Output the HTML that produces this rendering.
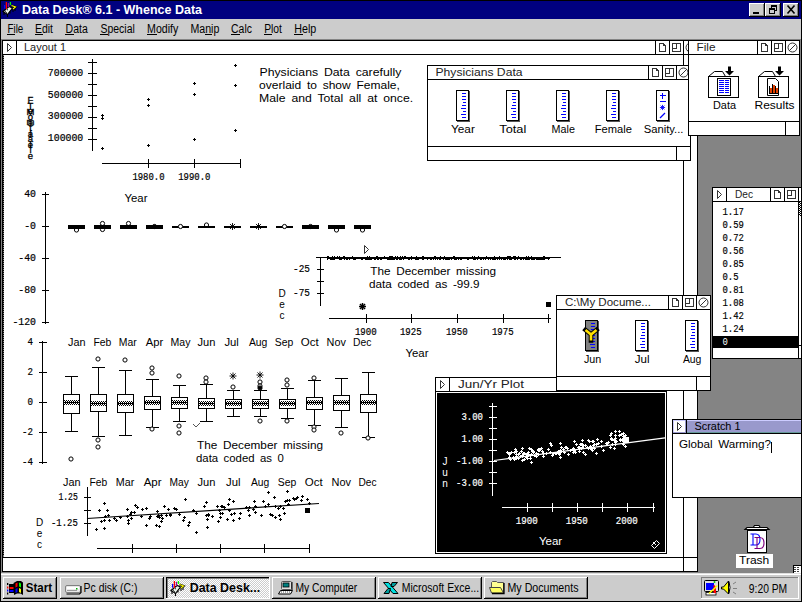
<!DOCTYPE html><html><head><meta charset="utf-8"><title>Data Desk</title><style>html,body{margin:0;padding:0;background:#fff;overflow:hidden}svg{display:block}text{white-space:pre}</style></head><body>
<svg width="803" height="603" viewBox="0 0 803 603" shape-rendering="crispEdges">
<defs><pattern id="chk" x="0" y="0" width="2" height="2" patternUnits="userSpaceOnUse"><rect x="0" y="0" width="1" height="1" fill="#000"/><rect x="1" y="1" width="1" height="1" fill="#000"/></pattern><pattern id="chkw" x="0" y="0" width="2" height="2" patternUnits="userSpaceOnUse"><rect x="0" y="0" width="2" height="2" fill="#cccccc"/><rect x="0" y="0" width="1" height="1" fill="#fff"/><rect x="1" y="1" width="1" height="1" fill="#fff"/></pattern><filter id="crisp" x="-10%" y="-30%" width="120%" height="160%"><feComponentTransfer><feFuncA type="discrete" tableValues="0 0 1 1 1"/></feComponentTransfer></filter></defs>
<rect x="0" y="0" width="803" height="603" fill="#fff"/>
<rect x="0" y="0" width="802" height="1" fill="#000"/><rect x="0" y="601" width="802" height="1" fill="#000"/><rect x="0" y="0" width="1" height="602" fill="#000"/><rect x="801" y="0" width="1" height="602" fill="#000"/>
<rect x="1" y="1" width="800" height="18" fill="#000080"/>
<text x="22" y="14" font-family="'Liberation Sans', sans-serif" font-size="12.5" fill="#fff" text-anchor="start" font-weight="bold" textLength="180" lengthAdjust="spacingAndGlyphs">Data Desk® 6.1 - Whence Data</text>
<g transform="translate(0 0)" shape-rendering="auto"><path d="M3 11.5 L9 6.5 L12.5 8 L7.5 14.5 Z" fill="#e8f0e8" stroke="#000" stroke-width="1.2"/><path d="M5 11.5 L6 11 M7 10 L8 9.5 M6 13 L7 12.5" stroke="#000" stroke-width="0.9"/><path d="M4 12 V15 M7.5 14.5 V17 M10 11.5 V13.5 M13 9 V12 M15 8 V11" stroke="#000" stroke-width="1.1"/><line x1="4.6" y1="5" x2="4.6" y2="8.7" stroke="#00f" stroke-width="1.3"/><line x1="6.4" y1="2" x2="6.4" y2="9" stroke="#f00" stroke-width="1.3"/><line x1="8.5" y1="3" x2="8.5" y2="7" stroke="#909" stroke-width="1.3"/><line x1="10.4" y1="2" x2="10.4" y2="5" stroke="#0f0" stroke-width="1.3"/><path d="M11.5 5.5 L15.5 7 L13 9" fill="none" stroke="#000" stroke-width="2.2"/><path d="M11.5 5.5 L15.5 7 L13 9" fill="none" stroke="#ff0" stroke-width="1.1"/></g>
<rect x="749" y="3" width="16" height="14" fill="#cccccc"/><rect x="749" y="3" width="16" height="1" fill="#fff"/><rect x="749" y="3" width="1" height="14" fill="#fff"/><rect x="749" y="16" width="16" height="1" fill="#000"/><rect x="764" y="3" width="1" height="14" fill="#000"/><rect x="750" y="15" width="14" height="1" fill="#808080"/><rect x="763" y="4" width="1" height="12" fill="#808080"/>
<rect x="765" y="3" width="16" height="14" fill="#cccccc"/><rect x="765" y="3" width="16" height="1" fill="#fff"/><rect x="765" y="3" width="1" height="14" fill="#fff"/><rect x="765" y="16" width="16" height="1" fill="#000"/><rect x="780" y="3" width="1" height="14" fill="#000"/><rect x="766" y="15" width="14" height="1" fill="#808080"/><rect x="779" y="4" width="1" height="12" fill="#808080"/>
<rect x="783" y="3" width="16" height="14" fill="#cccccc"/><rect x="783" y="3" width="16" height="1" fill="#fff"/><rect x="783" y="3" width="1" height="14" fill="#fff"/><rect x="783" y="16" width="16" height="1" fill="#000"/><rect x="798" y="3" width="1" height="14" fill="#000"/><rect x="784" y="15" width="14" height="1" fill="#808080"/><rect x="797" y="4" width="1" height="12" fill="#808080"/>
<rect x="753" y="12" width="6" height="2" fill="#000"/>
<rect x="771" y="5" width="6" height="1" fill="#000"/><rect x="771" y="10" width="6" height="1" fill="#000"/><rect x="771" y="5" width="1" height="6" fill="#000"/><rect x="776" y="5" width="1" height="6" fill="#000"/><rect x="771" y="6" width="6" height="1" fill="#000"/><rect x="769" y="8" width="6" height="6" fill="#cccccc"/><rect x="769" y="8" width="6" height="1" fill="#000"/><rect x="769" y="13" width="6" height="1" fill="#000"/><rect x="769" y="8" width="1" height="6" fill="#000"/><rect x="774" y="8" width="1" height="6" fill="#000"/><rect x="769" y="9" width="6" height="1" fill="#000"/>
<path d="M787.5 5.5 L794.5 13.5 M794.5 5.5 L787.5 13.5" stroke="#000" stroke-width="1.6" shape-rendering="auto"/>
<rect x="1" y="19" width="800" height="20" fill="#cccccc"/>
<text x="7.5" y="32.5" font-family="'Liberation Sans', sans-serif" font-size="12" fill="#000" text-anchor="start" font-weight="normal" textLength="15.8" lengthAdjust="spacingAndGlyphs">File</text>
<text x="35" y="32.5" font-family="'Liberation Sans', sans-serif" font-size="12" fill="#000" text-anchor="start" font-weight="normal" textLength="18" lengthAdjust="spacingAndGlyphs">Edit</text>
<text x="65.6" y="32.5" font-family="'Liberation Sans', sans-serif" font-size="12" fill="#000" text-anchor="start" font-weight="normal" textLength="22.2" lengthAdjust="spacingAndGlyphs">Data</text>
<text x="100.5" y="32.5" font-family="'Liberation Sans', sans-serif" font-size="12" fill="#000" text-anchor="start" font-weight="normal" textLength="34.3" lengthAdjust="spacingAndGlyphs">Special</text>
<text x="147.1" y="32.5" font-family="'Liberation Sans', sans-serif" font-size="12" fill="#000" text-anchor="start" font-weight="normal" textLength="31.2" lengthAdjust="spacingAndGlyphs">Modify</text>
<text x="190.4" y="32.5" font-family="'Liberation Sans', sans-serif" font-size="12" fill="#000" text-anchor="start" font-weight="normal" textLength="28.9" lengthAdjust="spacingAndGlyphs">Manip</text>
<text x="231.1" y="32.5" font-family="'Liberation Sans', sans-serif" font-size="12" fill="#000" text-anchor="start" font-weight="normal" textLength="20.8" lengthAdjust="spacingAndGlyphs">Calc</text>
<text x="264.2" y="32.5" font-family="'Liberation Sans', sans-serif" font-size="12" fill="#000" text-anchor="start" font-weight="normal" textLength="17.8" lengthAdjust="spacingAndGlyphs">Plot</text>
<text x="294.3" y="32.5" font-family="'Liberation Sans', sans-serif" font-size="12" fill="#000" text-anchor="start" font-weight="normal" textLength="22.0" lengthAdjust="spacingAndGlyphs">Help</text>
<rect x="7" y="34" width="8" height="1" fill="#000"/><rect x="35" y="34" width="8" height="1" fill="#000"/><rect x="65" y="34" width="9" height="1" fill="#000"/><rect x="100" y="34" width="8" height="1" fill="#000"/><rect x="147" y="34" width="10" height="1" fill="#000"/><rect x="205" y="34" width="7" height="1" fill="#000"/><rect x="231" y="34" width="9" height="1" fill="#000"/><rect x="264" y="34" width="8" height="1" fill="#000"/><rect x="294" y="34" width="9" height="1" fill="#000"/>
<rect x="1" y="39" width="800" height="534" fill="#848484"/>
<rect x="2" y="40" width="696" height="532" fill="#fff"/><rect x="2" y="40" width="696" height="1" fill="#000"/><rect x="2" y="571" width="696" height="1" fill="#000"/><rect x="2" y="40" width="1" height="532" fill="#000"/><rect x="697" y="40" width="1" height="532" fill="#000"/>
<rect x="2" y="54" width="696" height="1" fill="#000"/>
<rect x="16" y="40" width="1" height="15" fill="#000"/>
<path d="M7.5 43.5 L11.5 47.5 L7.5 51.5 Z" fill="none" stroke="#333" stroke-width="1" shape-rendering="auto"/>
<text x="24" y="51" font-family="'Liberation Sans', sans-serif" font-size="10" fill="#222" text-anchor="start" font-weight="normal" textLength="42" lengthAdjust="spacingAndGlyphs">Layout 1</text>
<rect x="655" y="40" width="1" height="15" fill="#000"/><rect x="669" y="40" width="1" height="15" fill="#000"/><rect x="683" y="40" width="1" height="15" fill="#000"/>
<rect x="659" y="43" width="1" height="9" fill="#333"/><rect x="659" y="43" width="5" height="1" fill="#333"/><rect x="659" y="51" width="7" height="1" fill="#333"/><rect x="665" y="45" width="1" height="7" fill="#333"/><rect x="664" y="44" width="1" height="1" fill="#333"/><rect x="663" y="44" width="1" height="2" fill="#333"/><rect x="663" y="45" width="3" height="1" fill="#333"/><rect x="672" y="43" width="9" height="1" fill="#333"/><rect x="672" y="51" width="9" height="1" fill="#333"/><rect x="672" y="43" width="1" height="9" fill="#333"/><rect x="680" y="43" width="1" height="9" fill="#333"/><rect x="676" y="43" width="1" height="6" fill="#333"/><rect x="672" y="48" width="5" height="1" fill="#333"/><circle cx="690.5" cy="47.5" r="4.5" fill="none" stroke="#333" stroke-width="1" shape-rendering="auto"/><line x1="687" y1="51" x2="694" y2="44" stroke="#333" stroke-width="1" shape-rendering="auto"/>
<rect x="3" y="55" width="1" height="502" fill="#888"/>
<rect x="3" y="56" width="1" height="1" fill="#000"/><rect x="3" y="58" width="1" height="1" fill="#000"/><rect x="3" y="60" width="1" height="1" fill="#000"/><rect x="3" y="62" width="1" height="1" fill="#000"/><rect x="3" y="64" width="1" height="1" fill="#000"/><rect x="3" y="66" width="1" height="1" fill="#000"/><rect x="3" y="68" width="1" height="1" fill="#000"/><rect x="3" y="70" width="1" height="1" fill="#000"/><rect x="3" y="72" width="1" height="1" fill="#000"/><rect x="3" y="74" width="1" height="1" fill="#000"/><rect x="3" y="76" width="1" height="1" fill="#000"/><rect x="3" y="78" width="1" height="1" fill="#000"/><rect x="3" y="80" width="1" height="1" fill="#000"/><rect x="3" y="82" width="1" height="1" fill="#000"/><rect x="3" y="84" width="1" height="1" fill="#000"/><rect x="3" y="86" width="1" height="1" fill="#000"/><rect x="3" y="88" width="1" height="1" fill="#000"/><rect x="3" y="90" width="1" height="1" fill="#000"/><rect x="3" y="92" width="1" height="1" fill="#000"/><rect x="3" y="94" width="1" height="1" fill="#000"/><rect x="3" y="96" width="1" height="1" fill="#000"/><rect x="3" y="98" width="1" height="1" fill="#000"/><rect x="3" y="100" width="1" height="1" fill="#000"/><rect x="3" y="102" width="1" height="1" fill="#000"/><rect x="3" y="104" width="1" height="1" fill="#000"/><rect x="3" y="106" width="1" height="1" fill="#000"/><rect x="3" y="108" width="1" height="1" fill="#000"/><rect x="3" y="110" width="1" height="1" fill="#000"/><rect x="3" y="112" width="1" height="1" fill="#000"/><rect x="3" y="114" width="1" height="1" fill="#000"/><rect x="3" y="116" width="1" height="1" fill="#000"/><rect x="3" y="118" width="1" height="1" fill="#000"/><rect x="3" y="120" width="1" height="1" fill="#000"/><rect x="3" y="122" width="1" height="1" fill="#000"/><rect x="3" y="124" width="1" height="1" fill="#000"/><rect x="3" y="126" width="1" height="1" fill="#000"/><rect x="3" y="128" width="1" height="1" fill="#000"/><rect x="3" y="130" width="1" height="1" fill="#000"/><rect x="3" y="132" width="1" height="1" fill="#000"/><rect x="3" y="134" width="1" height="1" fill="#000"/><rect x="3" y="136" width="1" height="1" fill="#000"/><rect x="3" y="138" width="1" height="1" fill="#000"/><rect x="3" y="140" width="1" height="1" fill="#000"/><rect x="3" y="142" width="1" height="1" fill="#000"/><rect x="3" y="144" width="1" height="1" fill="#000"/><rect x="3" y="146" width="1" height="1" fill="#000"/><rect x="3" y="148" width="1" height="1" fill="#000"/><rect x="3" y="150" width="1" height="1" fill="#000"/><rect x="3" y="152" width="1" height="1" fill="#000"/><rect x="3" y="154" width="1" height="1" fill="#000"/><rect x="3" y="156" width="1" height="1" fill="#000"/><rect x="3" y="158" width="1" height="1" fill="#000"/><rect x="3" y="160" width="1" height="1" fill="#000"/><rect x="3" y="162" width="1" height="1" fill="#000"/><rect x="3" y="164" width="1" height="1" fill="#000"/><rect x="3" y="166" width="1" height="1" fill="#000"/><rect x="3" y="168" width="1" height="1" fill="#000"/><rect x="3" y="170" width="1" height="1" fill="#000"/><rect x="3" y="172" width="1" height="1" fill="#000"/><rect x="3" y="174" width="1" height="1" fill="#000"/><rect x="3" y="176" width="1" height="1" fill="#000"/><rect x="3" y="178" width="1" height="1" fill="#000"/><rect x="3" y="180" width="1" height="1" fill="#000"/><rect x="3" y="182" width="1" height="1" fill="#000"/><rect x="3" y="184" width="1" height="1" fill="#000"/><rect x="3" y="186" width="1" height="1" fill="#000"/><rect x="3" y="188" width="1" height="1" fill="#000"/><rect x="3" y="190" width="1" height="1" fill="#000"/><rect x="3" y="192" width="1" height="1" fill="#000"/><rect x="3" y="194" width="1" height="1" fill="#000"/><rect x="3" y="196" width="1" height="1" fill="#000"/><rect x="3" y="198" width="1" height="1" fill="#000"/><rect x="3" y="200" width="1" height="1" fill="#000"/><rect x="3" y="202" width="1" height="1" fill="#000"/><rect x="3" y="204" width="1" height="1" fill="#000"/><rect x="3" y="206" width="1" height="1" fill="#000"/><rect x="3" y="208" width="1" height="1" fill="#000"/><rect x="3" y="210" width="1" height="1" fill="#000"/><rect x="3" y="212" width="1" height="1" fill="#000"/><rect x="3" y="214" width="1" height="1" fill="#000"/><rect x="3" y="216" width="1" height="1" fill="#000"/><rect x="3" y="218" width="1" height="1" fill="#000"/><rect x="3" y="220" width="1" height="1" fill="#000"/><rect x="3" y="222" width="1" height="1" fill="#000"/><rect x="3" y="224" width="1" height="1" fill="#000"/><rect x="3" y="226" width="1" height="1" fill="#000"/><rect x="3" y="228" width="1" height="1" fill="#000"/><rect x="3" y="230" width="1" height="1" fill="#000"/><rect x="3" y="232" width="1" height="1" fill="#000"/><rect x="3" y="234" width="1" height="1" fill="#000"/><rect x="3" y="236" width="1" height="1" fill="#000"/><rect x="3" y="238" width="1" height="1" fill="#000"/><rect x="3" y="240" width="1" height="1" fill="#000"/><rect x="3" y="242" width="1" height="1" fill="#000"/><rect x="3" y="244" width="1" height="1" fill="#000"/><rect x="3" y="246" width="1" height="1" fill="#000"/><rect x="3" y="248" width="1" height="1" fill="#000"/><rect x="3" y="250" width="1" height="1" fill="#000"/><rect x="3" y="252" width="1" height="1" fill="#000"/><rect x="3" y="254" width="1" height="1" fill="#000"/><rect x="3" y="256" width="1" height="1" fill="#000"/><rect x="3" y="258" width="1" height="1" fill="#000"/><rect x="3" y="260" width="1" height="1" fill="#000"/><rect x="3" y="262" width="1" height="1" fill="#000"/><rect x="3" y="264" width="1" height="1" fill="#000"/><rect x="3" y="266" width="1" height="1" fill="#000"/><rect x="3" y="268" width="1" height="1" fill="#000"/><rect x="3" y="270" width="1" height="1" fill="#000"/><rect x="3" y="272" width="1" height="1" fill="#000"/><rect x="3" y="274" width="1" height="1" fill="#000"/><rect x="3" y="276" width="1" height="1" fill="#000"/><rect x="3" y="278" width="1" height="1" fill="#000"/><rect x="3" y="280" width="1" height="1" fill="#000"/><rect x="3" y="282" width="1" height="1" fill="#000"/><rect x="3" y="284" width="1" height="1" fill="#000"/><rect x="3" y="286" width="1" height="1" fill="#000"/><rect x="3" y="288" width="1" height="1" fill="#000"/><rect x="3" y="290" width="1" height="1" fill="#000"/><rect x="3" y="292" width="1" height="1" fill="#000"/><rect x="3" y="294" width="1" height="1" fill="#000"/><rect x="3" y="296" width="1" height="1" fill="#000"/><rect x="3" y="298" width="1" height="1" fill="#000"/><rect x="3" y="300" width="1" height="1" fill="#000"/><rect x="3" y="302" width="1" height="1" fill="#000"/><rect x="3" y="304" width="1" height="1" fill="#000"/><rect x="3" y="306" width="1" height="1" fill="#000"/><rect x="3" y="308" width="1" height="1" fill="#000"/><rect x="3" y="310" width="1" height="1" fill="#000"/><rect x="3" y="312" width="1" height="1" fill="#000"/><rect x="3" y="314" width="1" height="1" fill="#000"/><rect x="3" y="316" width="1" height="1" fill="#000"/><rect x="3" y="318" width="1" height="1" fill="#000"/><rect x="3" y="320" width="1" height="1" fill="#000"/><rect x="3" y="322" width="1" height="1" fill="#000"/><rect x="3" y="324" width="1" height="1" fill="#000"/><rect x="3" y="326" width="1" height="1" fill="#000"/><rect x="3" y="328" width="1" height="1" fill="#000"/><rect x="3" y="330" width="1" height="1" fill="#000"/><rect x="3" y="332" width="1" height="1" fill="#000"/><rect x="3" y="334" width="1" height="1" fill="#000"/><rect x="3" y="336" width="1" height="1" fill="#000"/><rect x="3" y="338" width="1" height="1" fill="#000"/><rect x="3" y="340" width="1" height="1" fill="#000"/><rect x="3" y="342" width="1" height="1" fill="#000"/><rect x="3" y="344" width="1" height="1" fill="#000"/><rect x="3" y="346" width="1" height="1" fill="#000"/><rect x="3" y="348" width="1" height="1" fill="#000"/><rect x="3" y="350" width="1" height="1" fill="#000"/><rect x="3" y="352" width="1" height="1" fill="#000"/><rect x="3" y="354" width="1" height="1" fill="#000"/><rect x="3" y="356" width="1" height="1" fill="#000"/><rect x="3" y="358" width="1" height="1" fill="#000"/><rect x="3" y="360" width="1" height="1" fill="#000"/><rect x="3" y="362" width="1" height="1" fill="#000"/><rect x="3" y="364" width="1" height="1" fill="#000"/><rect x="3" y="366" width="1" height="1" fill="#000"/><rect x="3" y="368" width="1" height="1" fill="#000"/><rect x="3" y="370" width="1" height="1" fill="#000"/><rect x="3" y="372" width="1" height="1" fill="#000"/><rect x="3" y="374" width="1" height="1" fill="#000"/><rect x="3" y="376" width="1" height="1" fill="#000"/><rect x="3" y="378" width="1" height="1" fill="#000"/><rect x="3" y="380" width="1" height="1" fill="#000"/><rect x="3" y="382" width="1" height="1" fill="#000"/><rect x="3" y="384" width="1" height="1" fill="#000"/><rect x="3" y="386" width="1" height="1" fill="#000"/><rect x="3" y="388" width="1" height="1" fill="#000"/><rect x="3" y="390" width="1" height="1" fill="#000"/><rect x="3" y="392" width="1" height="1" fill="#000"/><rect x="3" y="394" width="1" height="1" fill="#000"/><rect x="3" y="396" width="1" height="1" fill="#000"/><rect x="3" y="398" width="1" height="1" fill="#000"/><rect x="3" y="400" width="1" height="1" fill="#000"/><rect x="3" y="402" width="1" height="1" fill="#000"/><rect x="3" y="404" width="1" height="1" fill="#000"/><rect x="3" y="406" width="1" height="1" fill="#000"/><rect x="3" y="408" width="1" height="1" fill="#000"/><rect x="3" y="410" width="1" height="1" fill="#000"/><rect x="3" y="412" width="1" height="1" fill="#000"/><rect x="3" y="414" width="1" height="1" fill="#000"/><rect x="3" y="416" width="1" height="1" fill="#000"/><rect x="3" y="418" width="1" height="1" fill="#000"/><rect x="3" y="420" width="1" height="1" fill="#000"/><rect x="3" y="422" width="1" height="1" fill="#000"/><rect x="3" y="424" width="1" height="1" fill="#000"/><rect x="3" y="426" width="1" height="1" fill="#000"/><rect x="3" y="428" width="1" height="1" fill="#000"/><rect x="3" y="430" width="1" height="1" fill="#000"/><rect x="3" y="432" width="1" height="1" fill="#000"/><rect x="3" y="434" width="1" height="1" fill="#000"/><rect x="3" y="436" width="1" height="1" fill="#000"/><rect x="3" y="438" width="1" height="1" fill="#000"/><rect x="3" y="440" width="1" height="1" fill="#000"/><rect x="3" y="442" width="1" height="1" fill="#000"/><rect x="3" y="444" width="1" height="1" fill="#000"/><rect x="3" y="446" width="1" height="1" fill="#000"/><rect x="3" y="448" width="1" height="1" fill="#000"/><rect x="3" y="450" width="1" height="1" fill="#000"/><rect x="3" y="452" width="1" height="1" fill="#000"/><rect x="3" y="454" width="1" height="1" fill="#000"/><rect x="3" y="456" width="1" height="1" fill="#000"/><rect x="3" y="458" width="1" height="1" fill="#000"/><rect x="3" y="460" width="1" height="1" fill="#000"/><rect x="3" y="462" width="1" height="1" fill="#000"/><rect x="3" y="464" width="1" height="1" fill="#000"/><rect x="3" y="466" width="1" height="1" fill="#000"/><rect x="3" y="468" width="1" height="1" fill="#000"/><rect x="3" y="470" width="1" height="1" fill="#000"/><rect x="3" y="472" width="1" height="1" fill="#000"/><rect x="3" y="474" width="1" height="1" fill="#000"/><rect x="3" y="476" width="1" height="1" fill="#000"/><rect x="3" y="478" width="1" height="1" fill="#000"/><rect x="3" y="480" width="1" height="1" fill="#000"/><rect x="3" y="482" width="1" height="1" fill="#000"/><rect x="3" y="484" width="1" height="1" fill="#000"/><rect x="3" y="486" width="1" height="1" fill="#000"/><rect x="3" y="488" width="1" height="1" fill="#000"/><rect x="3" y="490" width="1" height="1" fill="#000"/><rect x="3" y="492" width="1" height="1" fill="#000"/><rect x="3" y="494" width="1" height="1" fill="#000"/><rect x="3" y="496" width="1" height="1" fill="#000"/><rect x="3" y="498" width="1" height="1" fill="#000"/><rect x="3" y="500" width="1" height="1" fill="#000"/><rect x="3" y="502" width="1" height="1" fill="#000"/><rect x="3" y="504" width="1" height="1" fill="#000"/><rect x="3" y="506" width="1" height="1" fill="#000"/><rect x="3" y="508" width="1" height="1" fill="#000"/><rect x="3" y="510" width="1" height="1" fill="#000"/><rect x="3" y="512" width="1" height="1" fill="#000"/><rect x="3" y="514" width="1" height="1" fill="#000"/><rect x="3" y="516" width="1" height="1" fill="#000"/><rect x="3" y="518" width="1" height="1" fill="#000"/><rect x="3" y="520" width="1" height="1" fill="#000"/><rect x="3" y="522" width="1" height="1" fill="#000"/><rect x="3" y="524" width="1" height="1" fill="#000"/><rect x="3" y="526" width="1" height="1" fill="#000"/><rect x="3" y="528" width="1" height="1" fill="#000"/><rect x="3" y="530" width="1" height="1" fill="#000"/><rect x="3" y="532" width="1" height="1" fill="#000"/><rect x="3" y="534" width="1" height="1" fill="#000"/><rect x="3" y="536" width="1" height="1" fill="#000"/><rect x="3" y="538" width="1" height="1" fill="#000"/><rect x="3" y="540" width="1" height="1" fill="#000"/><rect x="3" y="542" width="1" height="1" fill="#000"/><rect x="3" y="544" width="1" height="1" fill="#000"/><rect x="3" y="546" width="1" height="1" fill="#000"/><rect x="3" y="548" width="1" height="1" fill="#000"/><rect x="3" y="550" width="1" height="1" fill="#000"/><rect x="3" y="552" width="1" height="1" fill="#000"/><rect x="3" y="554" width="1" height="1" fill="#000"/>
<rect x="683" y="54" width="1" height="518" fill="#000"/>
<rect x="2" y="557" width="696" height="1" fill="#000"/>
<rect x="92" y="59" width="1" height="92" fill="#000"/>
<rect x="88" y="62" width="9" height="1" fill="#000"/>
<rect x="88" y="73" width="9" height="1" fill="#000"/>
<rect x="88" y="84" width="9" height="1" fill="#000"/>
<rect x="88" y="95" width="9" height="1" fill="#000"/>
<rect x="88" y="106" width="9" height="1" fill="#000"/>
<rect x="88" y="117" width="9" height="1" fill="#000"/>
<rect x="88" y="128" width="9" height="1" fill="#000"/>
<rect x="88" y="139" width="9" height="1" fill="#000"/>
<text stroke="#000" stroke-width="0.2" x="47.8" y="75.7" font-family="'Liberation Mono', monospace" font-size="10" fill="#000" text-anchor="start" font-weight="normal" textLength="35.5" lengthAdjust="spacingAndGlyphs">700000</text>
<text stroke="#000" stroke-width="0.2" x="47.8" y="97.6" font-family="'Liberation Mono', monospace" font-size="10" fill="#000" text-anchor="start" font-weight="normal" textLength="35.5" lengthAdjust="spacingAndGlyphs">500000</text>
<text stroke="#000" stroke-width="0.2" x="47.8" y="119.4" font-family="'Liberation Mono', monospace" font-size="10" fill="#000" text-anchor="start" font-weight="normal" textLength="35.5" lengthAdjust="spacingAndGlyphs">300000</text>
<text stroke="#000" stroke-width="0.2" x="47.8" y="141.3" font-family="'Liberation Mono', monospace" font-size="10" fill="#000" text-anchor="start" font-weight="normal" textLength="35.5" lengthAdjust="spacingAndGlyphs">100000</text>
<rect x="102" y="163" width="139" height="1" fill="#000"/>
<rect x="148" y="159" width="1" height="9" fill="#000"/>
<rect x="194" y="159" width="1" height="9" fill="#000"/>
<rect x="240" y="159" width="1" height="9" fill="#000"/>
<text stroke="#000" stroke-width="0.2" x="132.4" y="179.7" font-family="'Liberation Mono', monospace" font-size="10" fill="#000" text-anchor="start" font-weight="normal" textLength="32.2" lengthAdjust="spacingAndGlyphs">1980.0</text>
<text stroke="#000" stroke-width="0.2" x="178.2" y="179.7" font-family="'Liberation Mono', monospace" font-size="10" fill="#000" text-anchor="start" font-weight="normal" textLength="32.2" lengthAdjust="spacingAndGlyphs">1990.0</text>
<text x="136" y="202" font-family="'Liberation Sans', sans-serif" font-size="10" fill="#000" text-anchor="middle" font-weight="normal" textLength="23" lengthAdjust="spacingAndGlyphs">Year</text>
<rect x="101" y="115" width="3" height="1" fill="#000"/><rect x="102" y="114" width="1" height="3" fill="#000"/>
<rect x="101" y="118" width="3" height="1" fill="#000"/><rect x="102" y="117" width="1" height="3" fill="#000"/>
<rect x="101" y="148" width="3" height="1" fill="#000"/><rect x="102" y="147" width="1" height="3" fill="#000"/>
<rect x="147" y="99" width="3" height="1" fill="#000"/><rect x="148" y="98" width="1" height="3" fill="#000"/>
<rect x="147" y="105" width="3" height="1" fill="#000"/><rect x="148" y="104" width="1" height="3" fill="#000"/>
<rect x="147" y="145" width="3" height="1" fill="#000"/><rect x="148" y="144" width="1" height="3" fill="#000"/>
<rect x="193" y="83" width="3" height="1" fill="#000"/><rect x="194" y="82" width="1" height="3" fill="#000"/>
<rect x="193" y="94" width="3" height="1" fill="#000"/><rect x="194" y="93" width="1" height="3" fill="#000"/>
<rect x="193" y="139" width="3" height="1" fill="#000"/><rect x="194" y="138" width="1" height="3" fill="#000"/>
<rect x="234" y="65" width="3" height="1" fill="#000"/><rect x="235" y="64" width="1" height="3" fill="#000"/>
<rect x="234" y="85" width="3" height="1" fill="#000"/><rect x="235" y="84" width="1" height="3" fill="#000"/>
<rect x="234" y="130" width="3" height="1" fill="#000"/><rect x="235" y="129" width="1" height="3" fill="#000"/>
<text stroke="#000" stroke-width="0.3" x="30.5" y="103.0" font-family="'Liberation Sans', sans-serif" font-size="9.5" fill="#000" text-anchor="middle" font-weight="normal">F</text>
<text stroke="#000" stroke-width="0.3" x="30.5" y="114.2" font-family="'Liberation Sans', sans-serif" font-size="9.5" fill="#000" text-anchor="middle" font-weight="normal">e</text>
<text stroke="#000" stroke-width="0.3" x="30.5" y="125.4" font-family="'Liberation Sans', sans-serif" font-size="9.5" fill="#000" text-anchor="middle" font-weight="normal">m</text>
<text stroke="#000" stroke-width="0.3" x="30.5" y="136.6" font-family="'Liberation Sans', sans-serif" font-size="9.5" fill="#000" text-anchor="middle" font-weight="normal">a</text>
<text stroke="#000" stroke-width="0.3" x="30.5" y="147.8" font-family="'Liberation Sans', sans-serif" font-size="9.5" fill="#000" text-anchor="middle" font-weight="normal">l</text>
<text stroke="#000" stroke-width="0.3" x="30.5" y="159.0" font-family="'Liberation Sans', sans-serif" font-size="9.5" fill="#000" text-anchor="middle" font-weight="normal">e</text>
<text stroke="#000" stroke-width="0.3" x="30.5" y="109" font-family="'Liberation Sans', sans-serif" font-size="9.5" fill="#000" text-anchor="middle" font-weight="normal">T</text>
<text stroke="#000" stroke-width="0.3" x="30.5" y="120" font-family="'Liberation Sans', sans-serif" font-size="9.5" fill="#000" text-anchor="middle" font-weight="normal">o</text>
<text stroke="#000" stroke-width="0.3" x="30.5" y="131" font-family="'Liberation Sans', sans-serif" font-size="9.5" fill="#000" text-anchor="middle" font-weight="normal">t</text>
<text stroke="#000" stroke-width="0.3" x="30.5" y="142" font-family="'Liberation Sans', sans-serif" font-size="9.5" fill="#000" text-anchor="middle" font-weight="normal">a</text>
<text stroke="#000" stroke-width="0.3" x="30.5" y="153" font-family="'Liberation Sans', sans-serif" font-size="9.5" fill="#000" text-anchor="middle" font-weight="normal">l</text>
<text stroke="#000" stroke-width="0.3" x="30.5" y="115" font-family="'Liberation Sans', sans-serif" font-size="9.5" fill="#000" text-anchor="middle" font-weight="normal">M</text>
<text stroke="#000" stroke-width="0.3" x="30.5" y="126" font-family="'Liberation Sans', sans-serif" font-size="9.5" fill="#000" text-anchor="middle" font-weight="normal">a</text>
<text stroke="#000" stroke-width="0.3" x="30.5" y="137" font-family="'Liberation Sans', sans-serif" font-size="9.5" fill="#000" text-anchor="middle" font-weight="normal">l</text>
<text stroke="#000" stroke-width="0.3" x="30.5" y="148" font-family="'Liberation Sans', sans-serif" font-size="9.5" fill="#000" text-anchor="middle" font-weight="normal">e</text>
<text x="259.5" y="76" font-family="'Liberation Sans', sans-serif" font-size="10" fill="#000" text-anchor="start" font-weight="normal" textLength="141.8" lengthAdjust="spacingAndGlyphs" word-spacing="2">Physicians Data carefully</text>
<text x="259.1" y="88.8" font-family="'Liberation Sans', sans-serif" font-size="10" fill="#000" text-anchor="start" font-weight="normal" textLength="140.8" lengthAdjust="spacingAndGlyphs" word-spacing="2">overlaid to show Female,</text>
<text x="259.1" y="101.5" font-family="'Liberation Sans', sans-serif" font-size="10" fill="#000" text-anchor="start" font-weight="normal" textLength="154" lengthAdjust="spacingAndGlyphs" word-spacing="2">Male and Total all at once.</text>
<rect x="45" y="192" width="1" height="132" fill="#000"/>
<rect x="42" y="194" width="7" height="1" fill="#000"/>
<text stroke="#000" stroke-width="0.2" x="24.2" y="196.8" font-family="'Liberation Mono', monospace" font-size="10" fill="#000" text-anchor="start" font-weight="normal" textLength="11.8" lengthAdjust="spacingAndGlyphs">40</text>
<rect x="42" y="226" width="7" height="1" fill="#000"/>
<text stroke="#000" stroke-width="0.2" x="24.2" y="228.8" font-family="'Liberation Mono', monospace" font-size="10" fill="#000" text-anchor="start" font-weight="normal" textLength="11.8" lengthAdjust="spacingAndGlyphs">-0</text>
<rect x="42" y="258" width="7" height="1" fill="#000"/>
<text stroke="#000" stroke-width="0.2" x="18.299999999999997" y="260.8" font-family="'Liberation Mono', monospace" font-size="10" fill="#000" text-anchor="start" font-weight="normal" textLength="17.7" lengthAdjust="spacingAndGlyphs">-40</text>
<rect x="42" y="290" width="7" height="1" fill="#000"/>
<text stroke="#000" stroke-width="0.2" x="18.299999999999997" y="292.8" font-family="'Liberation Mono', monospace" font-size="10" fill="#000" text-anchor="start" font-weight="normal" textLength="17.7" lengthAdjust="spacingAndGlyphs">-80</text>
<rect x="42" y="322" width="7" height="1" fill="#000"/>
<text stroke="#000" stroke-width="0.2" x="12.399999999999999" y="324.8" font-family="'Liberation Mono', monospace" font-size="10" fill="#000" text-anchor="start" font-weight="normal" textLength="23.6" lengthAdjust="spacingAndGlyphs">-120</text>
<rect x="68" y="225" width="17" height="4" fill="#000"/>
<circle cx="76.5" cy="230" r="2.1" fill="none" stroke="#000" stroke-width="1" shape-rendering="auto"/>
<rect x="94" y="225" width="17" height="4" fill="#000"/>
<circle cx="102.5" cy="223.5" r="2.1" fill="none" stroke="#000" stroke-width="1" shape-rendering="auto"/><circle cx="102.5" cy="229.5" r="2.1" fill="none" stroke="#000" stroke-width="1" shape-rendering="auto"/>
<rect x="120" y="225" width="17" height="4" fill="#000"/>
<circle cx="128.5" cy="223.5" r="2.1" fill="none" stroke="#000" stroke-width="1" shape-rendering="auto"/>
<rect x="146" y="225" width="17" height="4" fill="#000"/>
<circle cx="154.5" cy="226.5" r="2.1" fill="#000" stroke="#000" stroke-width="1" shape-rendering="auto"/>
<rect x="172" y="226" width="17" height="2" fill="#000"/>
<circle cx="180.5" cy="226.5" r="2.1" fill="#fff" stroke="#000" stroke-width="1" shape-rendering="auto"/>
<rect x="198" y="226" width="17" height="2" fill="#000"/>
<circle cx="206.5" cy="225" r="2.1" fill="none" stroke="#000" stroke-width="1" shape-rendering="auto"/>
<rect x="224" y="226" width="17" height="2" fill="#000"/>
<g shape-rendering="auto" stroke="#000" stroke-width="0.9"><line x1="232.5" y1="223.0" x2="232.5" y2="230.0"/><line x1="229.0" y1="226.5" x2="236.0" y2="226.5"/><line x1="229.98" y1="223.98" x2="235.02" y2="229.02"/><line x1="229.98" y1="229.02" x2="235.02" y2="223.98"/></g>
<rect x="250" y="226" width="17" height="2" fill="#000"/>
<g shape-rendering="auto" stroke="#000" stroke-width="0.9"><line x1="258.5" y1="223.0" x2="258.5" y2="230.0"/><line x1="255.0" y1="226.5" x2="262.0" y2="226.5"/><line x1="255.98" y1="223.98" x2="261.02" y2="229.02"/><line x1="255.98" y1="229.02" x2="261.02" y2="223.98"/></g><circle cx="258.5" cy="226.5" r="2" fill="#000"/>
<rect x="276" y="226" width="17" height="2" fill="#000"/>
<circle cx="284.5" cy="226.5" r="2.1" fill="#fff" stroke="#000" stroke-width="1" shape-rendering="auto"/>
<rect x="302" y="225" width="17" height="4" fill="#000"/>
<circle cx="310.5" cy="226.5" r="2.1" fill="none" stroke="#000" stroke-width="1" shape-rendering="auto"/>
<rect x="328" y="225" width="17" height="4" fill="#000"/>
<circle cx="336.5" cy="230" r="2.1" fill="none" stroke="#000" stroke-width="1" shape-rendering="auto"/>
<rect x="354" y="225" width="17" height="4" fill="#000"/>
<circle cx="362.5" cy="230" r="2.1" fill="none" stroke="#000" stroke-width="1" shape-rendering="auto"/>
<rect x="320" y="257" width="1" height="49" fill="#000"/>
<rect x="316" y="257" width="245" height="1" fill="#000"/>
<rect x="317" y="269" width="7" height="1" fill="#000"/>
<rect x="317" y="281" width="7" height="1" fill="#000"/>
<rect x="317" y="293" width="7" height="1" fill="#000"/>
<text stroke="#000" stroke-width="0.2" x="293" y="271.9" font-family="'Liberation Mono', monospace" font-size="10" fill="#000" text-anchor="start" font-weight="normal" textLength="17" lengthAdjust="spacingAndGlyphs">-25</text>
<text stroke="#000" stroke-width="0.2" x="293" y="295.8" font-family="'Liberation Mono', monospace" font-size="10" fill="#000" text-anchor="start" font-weight="normal" textLength="17" lengthAdjust="spacingAndGlyphs">-75</text>
<text x="282" y="297" font-family="'Liberation Sans', sans-serif" font-size="10" fill="#000" text-anchor="middle" font-weight="normal">D</text>
<text x="282" y="308" font-family="'Liberation Sans', sans-serif" font-size="10" fill="#000" text-anchor="middle" font-weight="normal">e</text>
<text x="282" y="319" font-family="'Liberation Sans', sans-serif" font-size="10" fill="#000" text-anchor="middle" font-weight="normal">c</text>
<rect x="327" y="258" width="223" height="1" fill="#000"/><rect x="327" y="259" width="1" height="1" fill="#000"/><rect x="327" y="256" width="1" height="1" fill="#000"/><rect x="328" y="256" width="1" height="1" fill="#000"/><rect x="330" y="259" width="1" height="1" fill="#000"/><rect x="331" y="259" width="1" height="1" fill="#000"/><rect x="332" y="259" width="1" height="1" fill="#000"/><rect x="332" y="256" width="1" height="1" fill="#000"/><rect x="333" y="259" width="1" height="1" fill="#000"/><rect x="334" y="259" width="1" height="1" fill="#000"/><rect x="334" y="256" width="1" height="1" fill="#000"/><rect x="337" y="256" width="1" height="1" fill="#000"/><rect x="339" y="259" width="1" height="1" fill="#000"/><rect x="339" y="256" width="1" height="1" fill="#000"/><rect x="340" y="259" width="1" height="1" fill="#000"/><rect x="341" y="259" width="1" height="1" fill="#000"/><rect x="343" y="256" width="1" height="1" fill="#000"/><rect x="344" y="259" width="1" height="1" fill="#000"/><rect x="344" y="256" width="1" height="1" fill="#000"/><rect x="346" y="259" width="1" height="1" fill="#000"/><rect x="347" y="259" width="1" height="1" fill="#000"/><rect x="349" y="259" width="1" height="1" fill="#000"/><rect x="352" y="256" width="1" height="1" fill="#000"/><rect x="353" y="259" width="1" height="1" fill="#000"/><rect x="354" y="259" width="1" height="1" fill="#000"/><rect x="355" y="259" width="1" height="1" fill="#000"/><rect x="361" y="259" width="1" height="1" fill="#000"/><rect x="362" y="259" width="1" height="1" fill="#000"/><rect x="365" y="259" width="1" height="1" fill="#000"/><rect x="366" y="259" width="1" height="1" fill="#000"/><rect x="367" y="259" width="1" height="1" fill="#000"/><rect x="367" y="256" width="1" height="1" fill="#000"/><rect x="368" y="259" width="1" height="1" fill="#000"/><rect x="369" y="259" width="1" height="1" fill="#000"/><rect x="369" y="256" width="1" height="1" fill="#000"/><rect x="370" y="259" width="1" height="1" fill="#000"/><rect x="371" y="259" width="1" height="1" fill="#000"/><rect x="374" y="259" width="1" height="1" fill="#000"/><rect x="375" y="259" width="1" height="1" fill="#000"/><rect x="376" y="256" width="1" height="1" fill="#000"/><rect x="377" y="259" width="1" height="1" fill="#000"/><rect x="377" y="256" width="1" height="1" fill="#000"/><rect x="378" y="259" width="1" height="1" fill="#000"/><rect x="380" y="259" width="1" height="1" fill="#000"/><rect x="381" y="259" width="1" height="1" fill="#000"/><rect x="384" y="256" width="1" height="1" fill="#000"/><rect x="387" y="259" width="1" height="1" fill="#000"/><rect x="388" y="259" width="1" height="1" fill="#000"/><rect x="389" y="259" width="1" height="1" fill="#000"/><rect x="389" y="256" width="1" height="1" fill="#000"/><rect x="390" y="259" width="1" height="1" fill="#000"/><rect x="390" y="256" width="1" height="1" fill="#000"/><rect x="391" y="259" width="1" height="1" fill="#000"/><rect x="391" y="256" width="1" height="1" fill="#000"/><rect x="392" y="259" width="1" height="1" fill="#000"/><rect x="392" y="256" width="1" height="1" fill="#000"/><rect x="393" y="259" width="1" height="1" fill="#000"/><rect x="394" y="259" width="1" height="1" fill="#000"/><rect x="395" y="256" width="1" height="1" fill="#000"/><rect x="396" y="259" width="1" height="1" fill="#000"/><rect x="397" y="259" width="1" height="1" fill="#000"/><rect x="397" y="256" width="1" height="1" fill="#000"/><rect x="399" y="259" width="1" height="1" fill="#000"/><rect x="400" y="259" width="1" height="1" fill="#000"/><rect x="400" y="256" width="1" height="1" fill="#000"/><rect x="401" y="259" width="1" height="1" fill="#000"/><rect x="402" y="256" width="1" height="1" fill="#000"/><rect x="403" y="259" width="1" height="1" fill="#000"/><rect x="404" y="256" width="1" height="1" fill="#000"/><rect x="405" y="256" width="1" height="1" fill="#000"/><rect x="408" y="259" width="1" height="1" fill="#000"/><rect x="409" y="259" width="1" height="1" fill="#000"/><rect x="411" y="259" width="1" height="1" fill="#000"/><rect x="411" y="256" width="1" height="1" fill="#000"/><rect x="415" y="259" width="1" height="1" fill="#000"/><rect x="416" y="259" width="1" height="1" fill="#000"/><rect x="416" y="256" width="1" height="1" fill="#000"/><rect x="417" y="259" width="1" height="1" fill="#000"/><rect x="418" y="259" width="1" height="1" fill="#000"/><rect x="422" y="259" width="1" height="1" fill="#000"/><rect x="422" y="256" width="1" height="1" fill="#000"/><rect x="423" y="259" width="1" height="1" fill="#000"/><rect x="423" y="256" width="1" height="1" fill="#000"/><rect x="427" y="259" width="1" height="1" fill="#000"/><rect x="430" y="259" width="1" height="1" fill="#000"/><rect x="431" y="259" width="1" height="1" fill="#000"/><rect x="433" y="259" width="1" height="1" fill="#000"/><rect x="434" y="256" width="1" height="1" fill="#000"/><rect x="435" y="259" width="1" height="1" fill="#000"/><rect x="435" y="256" width="1" height="1" fill="#000"/><rect x="437" y="259" width="1" height="1" fill="#000"/><rect x="439" y="259" width="1" height="1" fill="#000"/><rect x="440" y="259" width="1" height="1" fill="#000"/><rect x="440" y="256" width="1" height="1" fill="#000"/><rect x="443" y="259" width="1" height="1" fill="#000"/><rect x="444" y="256" width="1" height="1" fill="#000"/><rect x="445" y="259" width="1" height="1" fill="#000"/><rect x="446" y="259" width="1" height="1" fill="#000"/><rect x="447" y="259" width="1" height="1" fill="#000"/><rect x="448" y="259" width="1" height="1" fill="#000"/><rect x="449" y="259" width="1" height="1" fill="#000"/><rect x="451" y="259" width="1" height="1" fill="#000"/><rect x="453" y="256" width="1" height="1" fill="#000"/><rect x="454" y="259" width="1" height="1" fill="#000"/><rect x="454" y="256" width="1" height="1" fill="#000"/><rect x="455" y="259" width="1" height="1" fill="#000"/><rect x="456" y="259" width="1" height="1" fill="#000"/><rect x="458" y="259" width="1" height="1" fill="#000"/><rect x="460" y="259" width="1" height="1" fill="#000"/><rect x="461" y="259" width="1" height="1" fill="#000"/><rect x="467" y="259" width="1" height="1" fill="#000"/><rect x="468" y="259" width="1" height="1" fill="#000"/><rect x="472" y="256" width="1" height="1" fill="#000"/><rect x="473" y="259" width="1" height="1" fill="#000"/><rect x="474" y="259" width="1" height="1" fill="#000"/><rect x="474" y="256" width="1" height="1" fill="#000"/><rect x="475" y="259" width="1" height="1" fill="#000"/><rect x="477" y="259" width="1" height="1" fill="#000"/><rect x="478" y="256" width="1" height="1" fill="#000"/><rect x="480" y="259" width="1" height="1" fill="#000"/><rect x="481" y="259" width="1" height="1" fill="#000"/><rect x="483" y="259" width="1" height="1" fill="#000"/><rect x="485" y="259" width="1" height="1" fill="#000"/><rect x="486" y="256" width="1" height="1" fill="#000"/><rect x="488" y="259" width="1" height="1" fill="#000"/><rect x="490" y="259" width="1" height="1" fill="#000"/><rect x="492" y="259" width="1" height="1" fill="#000"/><rect x="493" y="259" width="1" height="1" fill="#000"/><rect x="494" y="259" width="1" height="1" fill="#000"/><rect x="494" y="256" width="1" height="1" fill="#000"/><rect x="495" y="259" width="1" height="1" fill="#000"/><rect x="497" y="259" width="1" height="1" fill="#000"/><rect x="499" y="259" width="1" height="1" fill="#000"/><rect x="499" y="256" width="1" height="1" fill="#000"/><rect x="501" y="259" width="1" height="1" fill="#000"/><rect x="503" y="259" width="1" height="1" fill="#000"/><rect x="504" y="259" width="1" height="1" fill="#000"/><rect x="505" y="259" width="1" height="1" fill="#000"/><rect x="507" y="259" width="1" height="1" fill="#000"/><rect x="507" y="256" width="1" height="1" fill="#000"/><rect x="508" y="256" width="1" height="1" fill="#000"/><rect x="509" y="259" width="1" height="1" fill="#000"/><rect x="509" y="256" width="1" height="1" fill="#000"/><rect x="510" y="259" width="1" height="1" fill="#000"/><rect x="510" y="256" width="1" height="1" fill="#000"/><rect x="511" y="259" width="1" height="1" fill="#000"/><rect x="513" y="256" width="1" height="1" fill="#000"/><rect x="514" y="259" width="1" height="1" fill="#000"/><rect x="514" y="256" width="1" height="1" fill="#000"/><rect x="515" y="259" width="1" height="1" fill="#000"/><rect x="515" y="256" width="1" height="1" fill="#000"/><rect x="517" y="259" width="1" height="1" fill="#000"/><rect x="518" y="256" width="1" height="1" fill="#000"/><rect x="520" y="259" width="1" height="1" fill="#000"/><rect x="521" y="259" width="1" height="1" fill="#000"/><rect x="523" y="259" width="1" height="1" fill="#000"/><rect x="525" y="259" width="1" height="1" fill="#000"/><rect x="526" y="259" width="1" height="1" fill="#000"/><rect x="526" y="256" width="1" height="1" fill="#000"/><rect x="527" y="259" width="1" height="1" fill="#000"/><rect x="528" y="259" width="1" height="1" fill="#000"/><rect x="528" y="256" width="1" height="1" fill="#000"/><rect x="529" y="259" width="1" height="1" fill="#000"/><rect x="531" y="259" width="1" height="1" fill="#000"/><rect x="531" y="256" width="1" height="1" fill="#000"/><rect x="532" y="259" width="1" height="1" fill="#000"/><rect x="533" y="259" width="1" height="1" fill="#000"/><rect x="534" y="259" width="1" height="1" fill="#000"/><rect x="536" y="259" width="1" height="1" fill="#000"/><rect x="537" y="259" width="1" height="1" fill="#000"/><rect x="538" y="259" width="1" height="1" fill="#000"/><rect x="539" y="259" width="1" height="1" fill="#000"/><rect x="540" y="259" width="1" height="1" fill="#000"/><rect x="541" y="259" width="1" height="1" fill="#000"/><rect x="542" y="259" width="1" height="1" fill="#000"/><rect x="543" y="259" width="1" height="1" fill="#000"/><rect x="543" y="256" width="1" height="1" fill="#000"/><rect x="544" y="259" width="1" height="1" fill="#000"/><rect x="544" y="256" width="1" height="1" fill="#000"/><rect x="548" y="259" width="1" height="1" fill="#000"/>
<path d="M364.5 245.5 L368.5 249.5 L364.5 253.5 Z" fill="none" stroke="#333" stroke-width="1" shape-rendering="auto"/>
<g shape-rendering="auto" stroke="#000" stroke-width="1.5"><line x1="362.5" y1="303.0" x2="362.5" y2="310.0"/><line x1="359.0" y1="306.5" x2="366.0" y2="306.5"/><line x1="359.98" y1="303.98" x2="365.02" y2="309.02"/><line x1="359.98" y1="309.02" x2="365.02" y2="303.98"/></g><circle cx="362.5" cy="306.5" r="1.8" fill="#000"/>
<rect x="329" y="318" width="222" height="1" fill="#000"/>
<rect x="366" y="314" width="1" height="9" fill="#000"/>
<text stroke="#000" stroke-width="0.2" x="354.9" y="334.8" font-family="'Liberation Mono', monospace" font-size="10" fill="#000" text-anchor="start" font-weight="normal" textLength="21.8" lengthAdjust="spacingAndGlyphs">1900</text>
<rect x="411" y="314" width="1" height="9" fill="#000"/>
<text stroke="#000" stroke-width="0.2" x="399.9" y="334.8" font-family="'Liberation Mono', monospace" font-size="10" fill="#000" text-anchor="start" font-weight="normal" textLength="21.8" lengthAdjust="spacingAndGlyphs">1925</text>
<rect x="457" y="314" width="1" height="9" fill="#000"/>
<text stroke="#000" stroke-width="0.2" x="445.9" y="334.8" font-family="'Liberation Mono', monospace" font-size="10" fill="#000" text-anchor="start" font-weight="normal" textLength="21.8" lengthAdjust="spacingAndGlyphs">1950</text>
<rect x="503" y="314" width="1" height="9" fill="#000"/>
<text stroke="#000" stroke-width="0.2" x="491.9" y="334.8" font-family="'Liberation Mono', monospace" font-size="10" fill="#000" text-anchor="start" font-weight="normal" textLength="21.8" lengthAdjust="spacingAndGlyphs">1975</text>
<rect x="548" y="314" width="1" height="9" fill="#000"/>
<text x="417" y="357" font-family="'Liberation Sans', sans-serif" font-size="10" fill="#000" text-anchor="middle" font-weight="normal" textLength="23" lengthAdjust="spacingAndGlyphs">Year</text>
<rect x="546" y="302" width="5" height="5" fill="#000"/>
<text x="370.3" y="275.1" font-family="'Liberation Sans', sans-serif" font-size="10" fill="#000" text-anchor="start" font-weight="normal" textLength="125.7" lengthAdjust="spacingAndGlyphs" word-spacing="2">The December missing</text>
<text x="369" y="287.6" font-family="'Liberation Sans', sans-serif" font-size="10" fill="#000" text-anchor="start" font-weight="normal" textLength="110.6" lengthAdjust="spacingAndGlyphs" word-spacing="2">data coded as -99.9</text>
<rect x="42" y="341" width="1" height="123" fill="#000"/>
<rect x="39" y="342" width="8" height="1" fill="#000"/>
<text stroke="#000" stroke-width="0.2" x="27.4" y="344.9" font-family="'Liberation Mono', monospace" font-size="10" fill="#000" text-anchor="start" font-weight="normal" textLength="5.5" lengthAdjust="spacingAndGlyphs">4</text>
<rect x="39" y="372" width="8" height="1" fill="#000"/>
<text stroke="#000" stroke-width="0.2" x="27.4" y="374.9" font-family="'Liberation Mono', monospace" font-size="10" fill="#000" text-anchor="start" font-weight="normal" textLength="5.5" lengthAdjust="spacingAndGlyphs">2</text>
<rect x="39" y="402" width="8" height="1" fill="#000"/>
<text stroke="#000" stroke-width="0.2" x="27.4" y="404.9" font-family="'Liberation Mono', monospace" font-size="10" fill="#000" text-anchor="start" font-weight="normal" textLength="5.5" lengthAdjust="spacingAndGlyphs">0</text>
<rect x="39" y="432" width="8" height="1" fill="#000"/>
<text stroke="#000" stroke-width="0.2" x="21.9" y="434.9" font-family="'Liberation Mono', monospace" font-size="10" fill="#000" text-anchor="start" font-weight="normal" textLength="11.0" lengthAdjust="spacingAndGlyphs">-2</text>
<rect x="39" y="462" width="8" height="1" fill="#000"/>
<text stroke="#000" stroke-width="0.2" x="21.9" y="464.9" font-family="'Liberation Mono', monospace" font-size="10" fill="#000" text-anchor="start" font-weight="normal" textLength="11.0" lengthAdjust="spacingAndGlyphs">-4</text>
<text x="68" y="345.6" font-family="'Liberation Sans', sans-serif" font-size="10" fill="#000" text-anchor="start" font-weight="normal" textLength="17.5" lengthAdjust="spacingAndGlyphs">Jan</text>
<text x="93.5" y="345.6" font-family="'Liberation Sans', sans-serif" font-size="10" fill="#000" text-anchor="start" font-weight="normal" textLength="17.9" lengthAdjust="spacingAndGlyphs">Feb</text>
<text x="118.8" y="345.6" font-family="'Liberation Sans', sans-serif" font-size="10" fill="#000" text-anchor="start" font-weight="normal" textLength="17.9" lengthAdjust="spacingAndGlyphs">Mar</text>
<text x="145.7" y="345.6" font-family="'Liberation Sans', sans-serif" font-size="10" fill="#000" text-anchor="start" font-weight="normal" textLength="17.5" lengthAdjust="spacingAndGlyphs">Apr</text>
<text x="170.6" y="345.6" font-family="'Liberation Sans', sans-serif" font-size="10" fill="#000" text-anchor="start" font-weight="normal" textLength="19.9" lengthAdjust="spacingAndGlyphs">May</text>
<text x="197.5" y="345.6" font-family="'Liberation Sans', sans-serif" font-size="10" fill="#000" text-anchor="start" font-weight="normal" textLength="17.9" lengthAdjust="spacingAndGlyphs">Jun</text>
<text x="224.4" y="345.6" font-family="'Liberation Sans', sans-serif" font-size="10" fill="#000" text-anchor="start" font-weight="normal" textLength="14.5" lengthAdjust="spacingAndGlyphs">Jul</text>
<text x="248.9" y="345.6" font-family="'Liberation Sans', sans-serif" font-size="10" fill="#000" text-anchor="start" font-weight="normal" textLength="18.5" lengthAdjust="spacingAndGlyphs">Aug</text>
<text x="274.8" y="345.6" font-family="'Liberation Sans', sans-serif" font-size="10" fill="#000" text-anchor="start" font-weight="normal" textLength="18.5" lengthAdjust="spacingAndGlyphs">Sep</text>
<text x="300.7" y="345.6" font-family="'Liberation Sans', sans-serif" font-size="10" fill="#000" text-anchor="start" font-weight="normal" textLength="17.9" lengthAdjust="spacingAndGlyphs">Oct</text>
<text x="326.6" y="345.6" font-family="'Liberation Sans', sans-serif" font-size="10" fill="#000" text-anchor="start" font-weight="normal" textLength="19.3" lengthAdjust="spacingAndGlyphs">Nov</text>
<text x="353.1" y="345.6" font-family="'Liberation Sans', sans-serif" font-size="10" fill="#000" text-anchor="start" font-weight="normal" textLength="18.3" lengthAdjust="spacingAndGlyphs">Dec</text>
<rect x="71" y="376" width="1" height="56" fill="#000"/>
<rect x="65" y="376" width="13" height="1" fill="#000"/>
<rect x="65" y="431" width="13" height="1" fill="#000"/>
<rect x="63" y="394" width="17" height="20" fill="#fff"/><rect x="63" y="394" width="17" height="1" fill="#000"/><rect x="63" y="413" width="17" height="1" fill="#000"/><rect x="63" y="394" width="1" height="20" fill="#000"/><rect x="79" y="394" width="1" height="20" fill="#000"/>
<rect x="64" y="400" width="15" height="5" fill="url(#chk)"/>
<rect x="64" y="402" width="15" height="1" fill="#000"/>
<rect x="98" y="367" width="1" height="70" fill="#000"/>
<rect x="92" y="367" width="13" height="1" fill="#000"/>
<rect x="92" y="436" width="13" height="1" fill="#000"/>
<rect x="90" y="394" width="17" height="18" fill="#fff"/><rect x="90" y="394" width="17" height="1" fill="#000"/><rect x="90" y="411" width="17" height="1" fill="#000"/><rect x="90" y="394" width="1" height="18" fill="#000"/><rect x="106" y="394" width="1" height="18" fill="#000"/>
<rect x="91" y="401" width="15" height="5" fill="url(#chk)"/>
<rect x="91" y="403" width="15" height="1" fill="#000"/>
<rect x="125" y="370" width="1" height="66" fill="#000"/>
<rect x="119" y="370" width="13" height="1" fill="#000"/>
<rect x="119" y="435" width="13" height="1" fill="#000"/>
<rect x="117" y="394" width="17" height="19" fill="#fff"/><rect x="117" y="394" width="17" height="1" fill="#000"/><rect x="117" y="412" width="17" height="1" fill="#000"/><rect x="117" y="394" width="1" height="19" fill="#000"/><rect x="133" y="394" width="1" height="19" fill="#000"/>
<rect x="118" y="401" width="15" height="5" fill="url(#chk)"/>
<rect x="118" y="403" width="15" height="1" fill="#000"/>
<rect x="152" y="379" width="1" height="49" fill="#000"/>
<rect x="146" y="379" width="13" height="1" fill="#000"/>
<rect x="146" y="427" width="13" height="1" fill="#000"/>
<rect x="144" y="396" width="17" height="14" fill="#fff"/><rect x="144" y="396" width="17" height="1" fill="#000"/><rect x="144" y="409" width="17" height="1" fill="#000"/><rect x="144" y="396" width="1" height="14" fill="#000"/><rect x="160" y="396" width="1" height="14" fill="#000"/>
<rect x="145" y="400" width="15" height="5" fill="url(#chk)"/>
<rect x="145" y="402" width="15" height="1" fill="#000"/>
<rect x="179" y="385" width="1" height="37" fill="#000"/>
<rect x="173" y="385" width="13" height="1" fill="#000"/>
<rect x="173" y="421" width="13" height="1" fill="#000"/>
<rect x="171" y="397" width="17" height="12" fill="#fff"/><rect x="171" y="397" width="17" height="1" fill="#000"/><rect x="171" y="408" width="17" height="1" fill="#000"/><rect x="171" y="397" width="1" height="12" fill="#000"/><rect x="187" y="397" width="1" height="12" fill="#000"/>
<rect x="172" y="400" width="15" height="5" fill="url(#chk)"/>
<rect x="172" y="402" width="15" height="1" fill="#000"/>
<rect x="206" y="384" width="1" height="38" fill="#000"/>
<rect x="200" y="384" width="13" height="1" fill="#000"/>
<rect x="200" y="421" width="13" height="1" fill="#000"/>
<rect x="198" y="398" width="17" height="11" fill="#fff"/><rect x="198" y="398" width="17" height="1" fill="#000"/><rect x="198" y="408" width="17" height="1" fill="#000"/><rect x="198" y="398" width="1" height="11" fill="#000"/><rect x="214" y="398" width="1" height="11" fill="#000"/>
<rect x="199" y="401" width="15" height="5" fill="url(#chk)"/>
<rect x="199" y="403" width="15" height="1" fill="#000"/>
<rect x="233" y="390" width="1" height="27" fill="#000"/>
<rect x="227" y="390" width="13" height="1" fill="#000"/>
<rect x="227" y="416" width="13" height="1" fill="#000"/>
<rect x="225" y="399" width="17" height="10" fill="#fff"/><rect x="225" y="399" width="17" height="1" fill="#000"/><rect x="225" y="408" width="17" height="1" fill="#000"/><rect x="225" y="399" width="1" height="10" fill="#000"/><rect x="241" y="399" width="1" height="10" fill="#000"/>
<rect x="226" y="401" width="15" height="5" fill="url(#chk)"/>
<rect x="226" y="403" width="15" height="1" fill="#000"/>
<rect x="260" y="390" width="1" height="27" fill="#000"/>
<rect x="254" y="390" width="13" height="1" fill="#000"/>
<rect x="254" y="416" width="13" height="1" fill="#000"/>
<rect x="252" y="399" width="17" height="10" fill="#fff"/><rect x="252" y="399" width="17" height="1" fill="#000"/><rect x="252" y="408" width="17" height="1" fill="#000"/><rect x="252" y="399" width="1" height="10" fill="#000"/><rect x="268" y="399" width="1" height="10" fill="#000"/>
<rect x="253" y="401" width="15" height="5" fill="url(#chk)"/>
<rect x="253" y="403" width="15" height="1" fill="#000"/>
<rect x="287" y="388" width="1" height="31" fill="#000"/>
<rect x="281" y="388" width="13" height="1" fill="#000"/>
<rect x="281" y="418" width="13" height="1" fill="#000"/>
<rect x="279" y="399" width="17" height="10" fill="#fff"/><rect x="279" y="399" width="17" height="1" fill="#000"/><rect x="279" y="408" width="17" height="1" fill="#000"/><rect x="279" y="399" width="1" height="10" fill="#000"/><rect x="295" y="399" width="1" height="10" fill="#000"/>
<rect x="280" y="401" width="15" height="5" fill="url(#chk)"/>
<rect x="280" y="403" width="15" height="1" fill="#000"/>
<rect x="314" y="380" width="1" height="46" fill="#000"/>
<rect x="308" y="380" width="13" height="1" fill="#000"/>
<rect x="308" y="425" width="13" height="1" fill="#000"/>
<rect x="306" y="397" width="17" height="13" fill="#fff"/><rect x="306" y="397" width="17" height="1" fill="#000"/><rect x="306" y="409" width="17" height="1" fill="#000"/><rect x="306" y="397" width="1" height="13" fill="#000"/><rect x="322" y="397" width="1" height="13" fill="#000"/>
<rect x="307" y="400" width="15" height="5" fill="url(#chk)"/>
<rect x="307" y="402" width="15" height="1" fill="#000"/>
<rect x="341" y="378" width="1" height="50" fill="#000"/>
<rect x="335" y="378" width="13" height="1" fill="#000"/>
<rect x="335" y="427" width="13" height="1" fill="#000"/>
<rect x="333" y="395" width="17" height="16" fill="#fff"/><rect x="333" y="395" width="17" height="1" fill="#000"/><rect x="333" y="410" width="17" height="1" fill="#000"/><rect x="333" y="395" width="1" height="16" fill="#000"/><rect x="349" y="395" width="1" height="16" fill="#000"/>
<rect x="334" y="400" width="15" height="5" fill="url(#chk)"/>
<rect x="334" y="402" width="15" height="1" fill="#000"/>
<rect x="368" y="372" width="1" height="66" fill="#000"/>
<rect x="362" y="372" width="13" height="1" fill="#000"/>
<rect x="362" y="437" width="13" height="1" fill="#000"/>
<rect x="360" y="394" width="17" height="19" fill="#fff"/><rect x="360" y="394" width="17" height="1" fill="#000"/><rect x="360" y="412" width="17" height="1" fill="#000"/><rect x="360" y="394" width="1" height="19" fill="#000"/><rect x="376" y="394" width="1" height="19" fill="#000"/>
<rect x="361" y="400" width="15" height="5" fill="url(#chk)"/>
<rect x="361" y="402" width="15" height="1" fill="#000"/>
<circle cx="71" cy="459" r="2.1" fill="#fff" stroke="#000" stroke-width="1" shape-rendering="auto"/>
<circle cx="98" cy="359" r="2.1" fill="#fff" stroke="#000" stroke-width="1" shape-rendering="auto"/>
<circle cx="98" cy="440" r="2.1" fill="#fff" stroke="#000" stroke-width="1" shape-rendering="auto"/>
<circle cx="98" cy="447" r="2.1" fill="#fff" stroke="#000" stroke-width="1" shape-rendering="auto"/>
<circle cx="125" cy="360" r="2.1" fill="#fff" stroke="#000" stroke-width="1" shape-rendering="auto"/>
<circle cx="152" cy="368" r="2.1" fill="#fff" stroke="#000" stroke-width="1" shape-rendering="auto"/>
<circle cx="152" cy="373" r="2.1" fill="#fff" stroke="#000" stroke-width="1" shape-rendering="auto"/>
<circle cx="152" cy="429" r="2.1" fill="#fff" stroke="#000" stroke-width="1" shape-rendering="auto"/>
<circle cx="179" cy="376" r="2.1" fill="#fff" stroke="#000" stroke-width="1" shape-rendering="auto"/>
<circle cx="179" cy="426" r="2.1" fill="#fff" stroke="#000" stroke-width="1" shape-rendering="auto"/>
<circle cx="179" cy="433" r="2.1" fill="#fff" stroke="#000" stroke-width="1" shape-rendering="auto"/>
<circle cx="206" cy="378" r="2.1" fill="#fff" stroke="#000" stroke-width="1" shape-rendering="auto"/>
<circle cx="206" cy="382" r="2.1" fill="#fff" stroke="#000" stroke-width="1" shape-rendering="auto"/>
<g shape-rendering="auto" stroke="#000" stroke-width="0.9"><line x1="233" y1="372.5" x2="233" y2="379.5"/><line x1="229.5" y1="376" x2="236.5" y2="376"/><line x1="230.48" y1="373.48" x2="235.52" y2="378.52"/><line x1="230.48" y1="378.52" x2="235.52" y2="373.48"/></g>
<circle cx="233" cy="387" r="2.1" fill="#fff" stroke="#000" stroke-width="1" shape-rendering="auto"/>
<g shape-rendering="auto" stroke="#000" stroke-width="0.9"><line x1="260" y1="371.5" x2="260" y2="378.5"/><line x1="256.5" y1="375" x2="263.5" y2="375"/><line x1="257.48" y1="372.48" x2="262.52" y2="377.52"/><line x1="257.48" y1="377.52" x2="262.52" y2="372.48"/></g>
<circle cx="260" cy="382" r="2.1" fill="#fff" stroke="#000" stroke-width="1" shape-rendering="auto"/>
<circle cx="260" cy="386" r="2.1" fill="#fff" stroke="#000" stroke-width="1" shape-rendering="auto"/>
<circle cx="260" cy="388" r="2.1" fill="#000" stroke="#000" stroke-width="1" shape-rendering="auto"/>
<circle cx="260" cy="421" r="2.1" fill="#fff" stroke="#000" stroke-width="1" shape-rendering="auto"/>
<circle cx="287" cy="380" r="2.1" fill="#fff" stroke="#000" stroke-width="1" shape-rendering="auto"/>
<circle cx="287" cy="385" r="2.1" fill="#fff" stroke="#000" stroke-width="1" shape-rendering="auto"/>
<circle cx="287" cy="421" r="2.1" fill="#fff" stroke="#000" stroke-width="1" shape-rendering="auto"/>
<circle cx="314" cy="378" r="2.1" fill="#fff" stroke="#000" stroke-width="1" shape-rendering="auto"/>
<circle cx="314" cy="427" r="2.1" fill="#fff" stroke="#000" stroke-width="1" shape-rendering="auto"/>
<circle cx="314" cy="430" r="2.1" fill="#fff" stroke="#000" stroke-width="1" shape-rendering="auto"/>
<circle cx="341" cy="433" r="2.1" fill="#fff" stroke="#000" stroke-width="1" shape-rendering="auto"/>
<circle cx="368" cy="438" r="2.1" fill="#fff" stroke="#000" stroke-width="1" shape-rendering="auto"/>
<line x1="196" y1="427" x2="200" y2="423" stroke="#555" stroke-width="1" shape-rendering="auto"/><line x1="193" y1="424" x2="196" y2="427" stroke="#555" stroke-width="1" shape-rendering="auto"/>
<text x="197.1" y="449.1" font-family="'Liberation Sans', sans-serif" font-size="10" fill="#000" text-anchor="start" font-weight="normal" textLength="125.9" lengthAdjust="spacingAndGlyphs" word-spacing="2">The December missing</text>
<text x="196" y="461.6" font-family="'Liberation Sans', sans-serif" font-size="10" fill="#000" text-anchor="start" font-weight="normal" textLength="87.8" lengthAdjust="spacingAndGlyphs" word-spacing="2">data coded as 0</text>
<text x="367" y="334" font-family="'Liberation Sans', sans-serif" font-size="10" fill="#000" text-anchor="start" font-weight="normal"></text>
<text x="63" y="485.6" font-family="'Liberation Sans', sans-serif" font-size="10" fill="#000" text-anchor="start" font-weight="normal" textLength="17.5" lengthAdjust="spacingAndGlyphs">Jan</text>
<text x="89.5" y="485.6" font-family="'Liberation Sans', sans-serif" font-size="10" fill="#000" text-anchor="start" font-weight="normal" textLength="17.7" lengthAdjust="spacingAndGlyphs">Feb</text>
<text x="115.8" y="485.6" font-family="'Liberation Sans', sans-serif" font-size="10" fill="#000" text-anchor="start" font-weight="normal" textLength="18.5" lengthAdjust="spacingAndGlyphs">Mar</text>
<text x="143.7" y="485.6" font-family="'Liberation Sans', sans-serif" font-size="10" fill="#000" text-anchor="start" font-weight="normal" textLength="17.9" lengthAdjust="spacingAndGlyphs">Apr</text>
<text x="169.6" y="485.6" font-family="'Liberation Sans', sans-serif" font-size="10" fill="#000" text-anchor="start" font-weight="normal" textLength="19.3" lengthAdjust="spacingAndGlyphs">May</text>
<text x="197.5" y="485.6" font-family="'Liberation Sans', sans-serif" font-size="10" fill="#000" text-anchor="start" font-weight="normal" textLength="17.9" lengthAdjust="spacingAndGlyphs">Jun</text>
<text x="226" y="485.6" font-family="'Liberation Sans', sans-serif" font-size="10" fill="#000" text-anchor="start" font-weight="normal" textLength="14.5" lengthAdjust="spacingAndGlyphs">Jul</text>
<text x="250.9" y="485.6" font-family="'Liberation Sans', sans-serif" font-size="10" fill="#000" text-anchor="start" font-weight="normal" textLength="18.3" lengthAdjust="spacingAndGlyphs">Aug</text>
<text x="277.8" y="485.6" font-family="'Liberation Sans', sans-serif" font-size="10" fill="#000" text-anchor="start" font-weight="normal" textLength="18.5" lengthAdjust="spacingAndGlyphs">Sep</text>
<text x="304.7" y="485.6" font-family="'Liberation Sans', sans-serif" font-size="10" fill="#000" text-anchor="start" font-weight="normal" textLength="17.9" lengthAdjust="spacingAndGlyphs">Oct</text>
<text x="331.6" y="485.6" font-family="'Liberation Sans', sans-serif" font-size="10" fill="#000" text-anchor="start" font-weight="normal" textLength="19.5" lengthAdjust="spacingAndGlyphs">Nov</text>
<text x="358.5" y="485.6" font-family="'Liberation Sans', sans-serif" font-size="10" fill="#000" text-anchor="start" font-weight="normal" textLength="18.0" lengthAdjust="spacingAndGlyphs">Dec</text>
<rect x="87" y="487" width="1" height="49" fill="#000"/>
<rect x="84" y="497" width="7" height="1" fill="#000"/>
<rect x="84" y="510" width="7" height="1" fill="#000"/>
<rect x="84" y="523" width="7" height="1" fill="#000"/>
<text stroke="#000" stroke-width="0.2" x="58.4" y="499.9" font-family="'Liberation Mono', monospace" font-size="10" fill="#000" text-anchor="start" font-weight="normal" textLength="19.4" lengthAdjust="spacingAndGlyphs">1.25</text>
<text stroke="#000" stroke-width="0.2" x="50.9" y="525.6" font-family="'Liberation Mono', monospace" font-size="10" fill="#000" text-anchor="start" font-weight="normal" textLength="26.9" lengthAdjust="spacingAndGlyphs">-1.25</text>
<text x="39.5" y="526" font-family="'Liberation Sans', sans-serif" font-size="10" fill="#000" text-anchor="middle" font-weight="normal">D</text>
<text x="39.5" y="537" font-family="'Liberation Sans', sans-serif" font-size="10" fill="#000" text-anchor="middle" font-weight="normal">e</text>
<text x="39.5" y="548" font-family="'Liberation Sans', sans-serif" font-size="10" fill="#000" text-anchor="middle" font-weight="normal">c</text>
<rect x="97" y="548" width="213" height="1" fill="#000"/>
<rect x="132" y="544" width="1" height="9" fill="#000"/>
<rect x="176" y="544" width="1" height="9" fill="#000"/>
<rect x="220" y="544" width="1" height="9" fill="#000"/>
<rect x="264" y="544" width="1" height="9" fill="#000"/>
<rect x="309" y="544" width="1" height="9" fill="#000"/>
<rect x="145" y="508" width="3" height="1" fill="#000"/><rect x="146" y="507" width="1" height="3" fill="#000"/><rect x="223" y="507" width="3" height="1" fill="#000"/><rect x="224" y="506" width="1" height="3" fill="#000"/><rect x="228" y="510" width="3" height="1" fill="#000"/><rect x="229" y="509" width="1" height="3" fill="#000"/><rect x="274" y="506" width="3" height="1" fill="#000"/><rect x="275" y="505" width="1" height="3" fill="#000"/><rect x="149" y="516" width="3" height="1" fill="#000"/><rect x="150" y="515" width="1" height="3" fill="#000"/><rect x="195" y="532" width="3" height="1" fill="#000"/><rect x="196" y="531" width="1" height="3" fill="#000"/><rect x="273" y="497" width="3" height="1" fill="#000"/><rect x="274" y="496" width="1" height="3" fill="#000"/><rect x="126" y="516" width="3" height="1" fill="#000"/><rect x="127" y="515" width="1" height="3" fill="#000"/><rect x="230" y="514" width="3" height="1" fill="#000"/><rect x="231" y="513" width="1" height="3" fill="#000"/><rect x="253" y="501" width="3" height="1" fill="#000"/><rect x="254" y="500" width="1" height="3" fill="#000"/><rect x="238" y="518" width="3" height="1" fill="#000"/><rect x="239" y="517" width="1" height="3" fill="#000"/><rect x="221" y="513" width="3" height="1" fill="#000"/><rect x="222" y="512" width="1" height="3" fill="#000"/><rect x="158" y="526" width="3" height="1" fill="#000"/><rect x="159" y="525" width="1" height="3" fill="#000"/><rect x="195" y="513" width="3" height="1" fill="#000"/><rect x="196" y="512" width="1" height="3" fill="#000"/><rect x="248" y="515" width="3" height="1" fill="#000"/><rect x="249" y="514" width="1" height="3" fill="#000"/><rect x="292" y="498" width="3" height="1" fill="#000"/><rect x="293" y="497" width="1" height="3" fill="#000"/><rect x="178" y="514" width="3" height="1" fill="#000"/><rect x="179" y="513" width="1" height="3" fill="#000"/><rect x="295" y="498" width="3" height="1" fill="#000"/><rect x="296" y="497" width="1" height="3" fill="#000"/><rect x="282" y="508" width="3" height="1" fill="#000"/><rect x="283" y="507" width="1" height="3" fill="#000"/><rect x="140" y="516" width="3" height="1" fill="#000"/><rect x="141" y="515" width="1" height="3" fill="#000"/><rect x="301" y="496" width="3" height="1" fill="#000"/><rect x="302" y="495" width="1" height="3" fill="#000"/><rect x="158" y="517" width="3" height="1" fill="#000"/><rect x="159" y="516" width="1" height="3" fill="#000"/><rect x="203" y="506" width="3" height="1" fill="#000"/><rect x="204" y="505" width="1" height="3" fill="#000"/><rect x="219" y="513" width="3" height="1" fill="#000"/><rect x="220" y="512" width="1" height="3" fill="#000"/><rect x="219" y="517" width="3" height="1" fill="#000"/><rect x="220" y="516" width="1" height="3" fill="#000"/><rect x="293" y="499" width="3" height="1" fill="#000"/><rect x="294" y="498" width="1" height="3" fill="#000"/><rect x="278" y="515" width="3" height="1" fill="#000"/><rect x="279" y="514" width="1" height="3" fill="#000"/><rect x="129" y="514" width="3" height="1" fill="#000"/><rect x="130" y="513" width="1" height="3" fill="#000"/><rect x="279" y="519" width="3" height="1" fill="#000"/><rect x="280" y="518" width="1" height="3" fill="#000"/><rect x="216" y="506" width="3" height="1" fill="#000"/><rect x="217" y="505" width="1" height="3" fill="#000"/><rect x="247" y="510" width="3" height="1" fill="#000"/><rect x="248" y="509" width="1" height="3" fill="#000"/><rect x="217" y="521" width="3" height="1" fill="#000"/><rect x="218" y="520" width="1" height="3" fill="#000"/><rect x="155" y="525" width="3" height="1" fill="#000"/><rect x="156" y="524" width="1" height="3" fill="#000"/><rect x="306" y="509" width="3" height="1" fill="#000"/><rect x="307" y="508" width="1" height="3" fill="#000"/><rect x="113" y="518" width="3" height="1" fill="#000"/><rect x="114" y="517" width="1" height="3" fill="#000"/><rect x="126" y="509" width="3" height="1" fill="#000"/><rect x="127" y="508" width="1" height="3" fill="#000"/><rect x="157" y="515" width="3" height="1" fill="#000"/><rect x="158" y="514" width="1" height="3" fill="#000"/><rect x="103" y="503" width="3" height="1" fill="#000"/><rect x="104" y="502" width="1" height="3" fill="#000"/><rect x="226" y="519" width="3" height="1" fill="#000"/><rect x="227" y="518" width="1" height="3" fill="#000"/><rect x="165" y="515" width="3" height="1" fill="#000"/><rect x="166" y="514" width="1" height="3" fill="#000"/><rect x="283" y="513" width="3" height="1" fill="#000"/><rect x="284" y="512" width="1" height="3" fill="#000"/><rect x="308" y="503" width="3" height="1" fill="#000"/><rect x="309" y="502" width="1" height="3" fill="#000"/><rect x="160" y="521" width="3" height="1" fill="#000"/><rect x="161" y="520" width="1" height="3" fill="#000"/><rect x="100" y="521" width="3" height="1" fill="#000"/><rect x="101" y="520" width="1" height="3" fill="#000"/><rect x="136" y="507" width="3" height="1" fill="#000"/><rect x="137" y="506" width="1" height="3" fill="#000"/><rect x="127" y="520" width="3" height="1" fill="#000"/><rect x="128" y="519" width="1" height="3" fill="#000"/><rect x="103" y="520" width="3" height="1" fill="#000"/><rect x="104" y="519" width="1" height="3" fill="#000"/><rect x="300" y="500" width="3" height="1" fill="#000"/><rect x="301" y="499" width="1" height="3" fill="#000"/><rect x="286" y="500" width="3" height="1" fill="#000"/><rect x="287" y="499" width="1" height="3" fill="#000"/><rect x="205" y="515" width="3" height="1" fill="#000"/><rect x="206" y="514" width="1" height="3" fill="#000"/><rect x="232" y="501" width="3" height="1" fill="#000"/><rect x="233" y="500" width="1" height="3" fill="#000"/><rect x="227" y="504" width="3" height="1" fill="#000"/><rect x="228" y="503" width="1" height="3" fill="#000"/><rect x="296" y="497" width="3" height="1" fill="#000"/><rect x="297" y="496" width="1" height="3" fill="#000"/><rect x="248" y="507" width="3" height="1" fill="#000"/><rect x="249" y="506" width="1" height="3" fill="#000"/><rect x="145" y="508" width="3" height="1" fill="#000"/><rect x="146" y="507" width="1" height="3" fill="#000"/><rect x="206" y="527" width="3" height="1" fill="#000"/><rect x="207" y="526" width="1" height="3" fill="#000"/><rect x="211" y="516" width="3" height="1" fill="#000"/><rect x="212" y="515" width="1" height="3" fill="#000"/><rect x="218" y="510" width="3" height="1" fill="#000"/><rect x="219" y="509" width="1" height="3" fill="#000"/><rect x="98" y="510" width="3" height="1" fill="#000"/><rect x="99" y="509" width="1" height="3" fill="#000"/><rect x="106" y="510" width="3" height="1" fill="#000"/><rect x="107" y="509" width="1" height="3" fill="#000"/><rect x="228" y="499" width="3" height="1" fill="#000"/><rect x="229" y="498" width="1" height="3" fill="#000"/><rect x="169" y="514" width="3" height="1" fill="#000"/><rect x="170" y="513" width="1" height="3" fill="#000"/><rect x="245" y="507" width="3" height="1" fill="#000"/><rect x="246" y="506" width="1" height="3" fill="#000"/><rect x="107" y="515" width="3" height="1" fill="#000"/><rect x="108" y="514" width="1" height="3" fill="#000"/><rect x="239" y="513" width="3" height="1" fill="#000"/><rect x="240" y="512" width="1" height="3" fill="#000"/><rect x="192" y="510" width="3" height="1" fill="#000"/><rect x="193" y="509" width="1" height="3" fill="#000"/><rect x="221" y="506" width="3" height="1" fill="#000"/><rect x="222" y="505" width="1" height="3" fill="#000"/><rect x="161" y="518" width="3" height="1" fill="#000"/><rect x="162" y="517" width="1" height="3" fill="#000"/><rect x="173" y="508" width="3" height="1" fill="#000"/><rect x="174" y="507" width="1" height="3" fill="#000"/><rect x="175" y="509" width="3" height="1" fill="#000"/><rect x="176" y="508" width="1" height="3" fill="#000"/><rect x="260" y="515" width="3" height="1" fill="#000"/><rect x="261" y="514" width="1" height="3" fill="#000"/><rect x="252" y="509" width="3" height="1" fill="#000"/><rect x="253" y="508" width="1" height="3" fill="#000"/><rect x="160" y="515" width="3" height="1" fill="#000"/><rect x="161" y="514" width="1" height="3" fill="#000"/><rect x="145" y="525" width="3" height="1" fill="#000"/><rect x="146" y="524" width="1" height="3" fill="#000"/><rect x="134" y="505" width="3" height="1" fill="#000"/><rect x="135" y="504" width="1" height="3" fill="#000"/><rect x="115" y="520" width="3" height="1" fill="#000"/><rect x="116" y="519" width="1" height="3" fill="#000"/><rect x="163" y="506" width="3" height="1" fill="#000"/><rect x="164" y="505" width="1" height="3" fill="#000"/><rect x="188" y="522" width="3" height="1" fill="#000"/><rect x="189" y="521" width="1" height="3" fill="#000"/><rect x="277" y="508" width="3" height="1" fill="#000"/><rect x="278" y="507" width="1" height="3" fill="#000"/><rect x="233" y="513" width="3" height="1" fill="#000"/><rect x="234" y="512" width="1" height="3" fill="#000"/><rect x="284" y="501" width="3" height="1" fill="#000"/><rect x="285" y="500" width="1" height="3" fill="#000"/><rect x="119" y="517" width="3" height="1" fill="#000"/><rect x="120" y="516" width="1" height="3" fill="#000"/><rect x="207" y="514" width="3" height="1" fill="#000"/><rect x="208" y="513" width="1" height="3" fill="#000"/><rect x="274" y="517" width="3" height="1" fill="#000"/><rect x="275" y="516" width="1" height="3" fill="#000"/><rect x="133" y="512" width="3" height="1" fill="#000"/><rect x="134" y="511" width="1" height="3" fill="#000"/><rect x="232" y="520" width="3" height="1" fill="#000"/><rect x="233" y="519" width="1" height="3" fill="#000"/><rect x="267" y="504" width="3" height="1" fill="#000"/><rect x="268" y="503" width="1" height="3" fill="#000"/><rect x="156" y="516" width="3" height="1" fill="#000"/><rect x="157" y="515" width="1" height="3" fill="#000"/><rect x="264" y="506" width="3" height="1" fill="#000"/><rect x="265" y="505" width="1" height="3" fill="#000"/><rect x="183" y="517" width="3" height="1" fill="#000"/><rect x="184" y="516" width="1" height="3" fill="#000"/><rect x="184" y="499" width="3" height="1" fill="#000"/><rect x="185" y="498" width="1" height="3" fill="#000"/><rect x="127" y="523" width="3" height="1" fill="#000"/><rect x="128" y="522" width="1" height="3" fill="#000"/><rect x="95" y="529" width="3" height="1" fill="#000"/><rect x="96" y="528" width="1" height="3" fill="#000"/><rect x="306" y="499" width="3" height="1" fill="#000"/><rect x="307" y="498" width="1" height="3" fill="#000"/><rect x="187" y="525" width="3" height="1" fill="#000"/><rect x="188" y="524" width="1" height="3" fill="#000"/><rect x="141" y="509" width="3" height="1" fill="#000"/><rect x="142" y="508" width="1" height="3" fill="#000"/><rect x="254" y="512" width="3" height="1" fill="#000"/><rect x="255" y="511" width="1" height="3" fill="#000"/><rect x="205" y="502" width="3" height="1" fill="#000"/><rect x="206" y="501" width="1" height="3" fill="#000"/><rect x="156" y="511" width="3" height="1" fill="#000"/><rect x="157" y="510" width="1" height="3" fill="#000"/><rect x="108" y="520" width="3" height="1" fill="#000"/><rect x="109" y="519" width="1" height="3" fill="#000"/><rect x="220" y="506" width="3" height="1" fill="#000"/><rect x="221" y="505" width="1" height="3" fill="#000"/><rect x="103" y="528" width="3" height="1" fill="#000"/><rect x="104" y="527" width="1" height="3" fill="#000"/><rect x="288" y="500" width="3" height="1" fill="#000"/><rect x="289" y="499" width="1" height="3" fill="#000"/><rect x="286" y="491" width="3" height="1" fill="#000"/><rect x="287" y="490" width="1" height="3" fill="#000"/><rect x="287" y="504" width="3" height="1" fill="#000"/><rect x="288" y="503" width="1" height="3" fill="#000"/><rect x="254" y="506" width="3" height="1" fill="#000"/><rect x="255" y="505" width="1" height="3" fill="#000"/><rect x="130" y="512" width="3" height="1" fill="#000"/><rect x="131" y="511" width="1" height="3" fill="#000"/><rect x="206" y="519" width="3" height="1" fill="#000"/><rect x="207" y="518" width="1" height="3" fill="#000"/><rect x="182" y="520" width="3" height="1" fill="#000"/><rect x="183" y="519" width="1" height="3" fill="#000"/><rect x="167" y="509" width="3" height="1" fill="#000"/><rect x="168" y="508" width="1" height="3" fill="#000"/><rect x="148" y="518" width="3" height="1" fill="#000"/><rect x="149" y="517" width="1" height="3" fill="#000"/><rect x="262" y="501" width="3" height="1" fill="#000"/><rect x="263" y="500" width="1" height="3" fill="#000"/><rect x="169" y="515" width="3" height="1" fill="#000"/><rect x="170" y="514" width="1" height="3" fill="#000"/><rect x="269" y="514" width="3" height="1" fill="#000"/><rect x="270" y="513" width="1" height="3" fill="#000"/><rect x="130" y="518" width="3" height="1" fill="#000"/><rect x="131" y="517" width="1" height="3" fill="#000"/><rect x="267" y="492" width="3" height="1" fill="#000"/><rect x="268" y="491" width="1" height="3" fill="#000"/><rect x="271" y="515" width="3" height="1" fill="#000"/><rect x="272" y="514" width="1" height="3" fill="#000"/><rect x="279" y="506" width="3" height="1" fill="#000"/><rect x="280" y="505" width="1" height="3" fill="#000"/><rect x="104" y="516" width="3" height="1" fill="#000"/><rect x="105" y="515" width="1" height="3" fill="#000"/><rect x="207" y="515" width="3" height="1" fill="#000"/><rect x="208" y="514" width="1" height="3" fill="#000"/>
<line x1="87" y1="518.5" x2="319" y2="503.5" stroke="#000" stroke-width="1.2" shape-rendering="auto"/>
<rect x="305" y="508" width="5" height="5" fill="#000"/>
<rect x="427" y="65" width="264" height="96" fill="#fff"/><rect x="427" y="65" width="264" height="1" fill="#000"/><rect x="427" y="160" width="264" height="1" fill="#000"/><rect x="427" y="65" width="1" height="96" fill="#000"/><rect x="690" y="65" width="1" height="96" fill="#000"/>
<rect x="427" y="79" width="264" height="1" fill="#000"/>
<rect x="427" y="146" width="264" height="1" fill="#000"/>
<rect x="676" y="146" width="1" height="15" fill="#000"/>
<text x="435.5" y="75.5" font-family="'Liberation Sans', sans-serif" font-size="10" fill="#222" text-anchor="start" font-weight="normal" textLength="87" lengthAdjust="spacingAndGlyphs">Physicians Data</text>
<rect x="648" y="65" width="1" height="15" fill="#000"/><rect x="662" y="65" width="1" height="15" fill="#000"/><rect x="676" y="65" width="1" height="15" fill="#000"/>
<rect x="652" y="68" width="1" height="9" fill="#333"/><rect x="652" y="68" width="5" height="1" fill="#333"/><rect x="652" y="76" width="7" height="1" fill="#333"/><rect x="658" y="70" width="1" height="7" fill="#333"/><rect x="657" y="69" width="1" height="1" fill="#333"/><rect x="656" y="69" width="1" height="2" fill="#333"/><rect x="656" y="70" width="3" height="1" fill="#333"/><rect x="665" y="68" width="9" height="1" fill="#333"/><rect x="665" y="76" width="9" height="1" fill="#333"/><rect x="665" y="68" width="1" height="9" fill="#333"/><rect x="673" y="68" width="1" height="9" fill="#333"/><rect x="669" y="68" width="1" height="6" fill="#333"/><rect x="665" y="73" width="5" height="1" fill="#333"/><circle cx="683.5" cy="72.5" r="4.5" fill="none" stroke="#333" stroke-width="1" shape-rendering="auto"/><line x1="680" y1="76" x2="687" y2="69" stroke="#333" stroke-width="1" shape-rendering="auto"/>
<rect x="457" y="91" width="13" height="31" fill="#555"/><rect x="456" y="90" width="13" height="31" fill="#fff"/><rect x="456" y="90" width="13" height="1" fill="#000"/><rect x="456" y="120" width="13" height="1" fill="#000"/><rect x="456" y="90" width="1" height="31" fill="#000"/><rect x="468" y="90" width="1" height="31" fill="#000"/><rect x="462" y="93" width="4" height="1" fill="#0000ff"/><rect x="462" y="96" width="4" height="1" fill="#0000ff"/><rect x="462" y="99" width="4" height="1" fill="#0000ff"/><rect x="463" y="102" width="3" height="1" fill="#0000ff"/><rect x="462" y="105" width="4" height="1" fill="#0000ff"/><rect x="461" y="108" width="5" height="1" fill="#0000ff"/><rect x="463" y="111" width="3" height="1" fill="#0000ff"/><rect x="461" y="114" width="5" height="1" fill="#0000ff"/><rect x="462" y="117" width="4" height="1" fill="#0000ff"/>
<text x="451" y="132.7" font-family="'Liberation Sans', sans-serif" font-size="10" fill="#000" text-anchor="start" font-weight="normal" textLength="23.9" lengthAdjust="spacingAndGlyphs">Year</text>
<rect x="507" y="91" width="13" height="31" fill="#555"/><rect x="506" y="90" width="13" height="31" fill="#fff"/><rect x="506" y="90" width="13" height="1" fill="#000"/><rect x="506" y="120" width="13" height="1" fill="#000"/><rect x="506" y="90" width="1" height="31" fill="#000"/><rect x="518" y="90" width="1" height="31" fill="#000"/><rect x="512" y="93" width="4" height="1" fill="#0000ff"/><rect x="512" y="96" width="4" height="1" fill="#0000ff"/><rect x="512" y="99" width="4" height="1" fill="#0000ff"/><rect x="513" y="102" width="3" height="1" fill="#0000ff"/><rect x="512" y="105" width="4" height="1" fill="#0000ff"/><rect x="511" y="108" width="5" height="1" fill="#0000ff"/><rect x="513" y="111" width="3" height="1" fill="#0000ff"/><rect x="511" y="114" width="5" height="1" fill="#0000ff"/><rect x="512" y="117" width="4" height="1" fill="#0000ff"/>
<text x="499.3" y="132.7" font-family="'Liberation Sans', sans-serif" font-size="10" fill="#000" text-anchor="start" font-weight="normal" textLength="27.0" lengthAdjust="spacingAndGlyphs">Total</text>
<rect x="557" y="91" width="13" height="31" fill="#555"/><rect x="556" y="90" width="13" height="31" fill="#fff"/><rect x="556" y="90" width="13" height="1" fill="#000"/><rect x="556" y="120" width="13" height="1" fill="#000"/><rect x="556" y="90" width="1" height="31" fill="#000"/><rect x="568" y="90" width="1" height="31" fill="#000"/><rect x="562" y="93" width="4" height="1" fill="#0000ff"/><rect x="562" y="96" width="4" height="1" fill="#0000ff"/><rect x="562" y="99" width="4" height="1" fill="#0000ff"/><rect x="563" y="102" width="3" height="1" fill="#0000ff"/><rect x="562" y="105" width="4" height="1" fill="#0000ff"/><rect x="561" y="108" width="5" height="1" fill="#0000ff"/><rect x="563" y="111" width="3" height="1" fill="#0000ff"/><rect x="561" y="114" width="5" height="1" fill="#0000ff"/><rect x="562" y="117" width="4" height="1" fill="#0000ff"/>
<text x="551.6" y="132.7" font-family="'Liberation Sans', sans-serif" font-size="10" fill="#000" text-anchor="start" font-weight="normal" textLength="23.3" lengthAdjust="spacingAndGlyphs">Male</text>
<rect x="607" y="91" width="13" height="31" fill="#555"/><rect x="606" y="90" width="13" height="31" fill="#fff"/><rect x="606" y="90" width="13" height="1" fill="#000"/><rect x="606" y="120" width="13" height="1" fill="#000"/><rect x="606" y="90" width="1" height="31" fill="#000"/><rect x="618" y="90" width="1" height="31" fill="#000"/><rect x="612" y="93" width="4" height="1" fill="#0000ff"/><rect x="612" y="96" width="4" height="1" fill="#0000ff"/><rect x="612" y="99" width="4" height="1" fill="#0000ff"/><rect x="613" y="102" width="3" height="1" fill="#0000ff"/><rect x="612" y="105" width="4" height="1" fill="#0000ff"/><rect x="611" y="108" width="5" height="1" fill="#0000ff"/><rect x="613" y="111" width="3" height="1" fill="#0000ff"/><rect x="611" y="114" width="5" height="1" fill="#0000ff"/><rect x="612" y="117" width="4" height="1" fill="#0000ff"/>
<text x="594.7" y="132.7" font-family="'Liberation Sans', sans-serif" font-size="10" fill="#000" text-anchor="start" font-weight="normal" textLength="37.2" lengthAdjust="spacingAndGlyphs">Female</text>
<rect x="657" y="91" width="13" height="31" fill="#555"/><rect x="656" y="90" width="13" height="31" fill="#fff"/><rect x="656" y="90" width="13" height="1" fill="#000"/><rect x="656" y="120" width="13" height="1" fill="#000"/><rect x="656" y="90" width="1" height="31" fill="#000"/><rect x="668" y="90" width="1" height="31" fill="#000"/>
<text x="643.7" y="132.7" font-family="'Liberation Sans', sans-serif" font-size="10" fill="#000" text-anchor="start" font-weight="normal" textLength="39.8" lengthAdjust="spacingAndGlyphs">Sanity...</text>
<rect x="660" y="95" width="6" height="1" fill="#0000ff"/><rect x="662" y="93" width="1" height="6" fill="#0000ff"/><rect x="660" y="93" width="1" height="1" fill="#fff"/>
<rect x="660" y="101" width="6" height="1" fill="#0000ff"/>
<g shape-rendering="auto" stroke="#0000ff" stroke-width="0.9"><line x1="662.5" y1="104.9" x2="662.5" y2="110.1"/><line x1="659.9" y1="107.5" x2="665.1" y2="107.5"/><line x1="660.628" y1="105.628" x2="664.372" y2="109.372"/><line x1="660.628" y1="109.372" x2="664.372" y2="105.628"/></g>
<line x1="660" y1="118" x2="665" y2="113" stroke="#0000ff" stroke-width="1.2" shape-rendering="auto"/>
<rect x="688" y="40" width="112" height="96" fill="#fff"/><rect x="688" y="40" width="112" height="1" fill="#000"/><rect x="688" y="135" width="112" height="1" fill="#000"/><rect x="688" y="40" width="1" height="96" fill="#000"/><rect x="799" y="40" width="1" height="96" fill="#000"/>
<rect x="688" y="54" width="112" height="1" fill="#000"/>
<rect x="688" y="121" width="112" height="1" fill="#000"/>
<rect x="785" y="121" width="1" height="15" fill="#000"/>
<text x="696.5" y="50.5" font-family="'Liberation Sans', sans-serif" font-size="10" fill="#222" text-anchor="start" font-weight="normal" textLength="19" lengthAdjust="spacingAndGlyphs">File</text>
<rect x="757" y="40" width="1" height="15" fill="#000"/><rect x="771" y="40" width="1" height="15" fill="#000"/><rect x="785" y="40" width="1" height="15" fill="#000"/>
<rect x="761" y="43" width="1" height="9" fill="#333"/><rect x="761" y="43" width="5" height="1" fill="#333"/><rect x="761" y="51" width="7" height="1" fill="#333"/><rect x="767" y="45" width="1" height="7" fill="#333"/><rect x="766" y="44" width="1" height="1" fill="#333"/><rect x="765" y="44" width="1" height="2" fill="#333"/><rect x="765" y="45" width="3" height="1" fill="#333"/><rect x="774" y="43" width="9" height="1" fill="#333"/><rect x="774" y="51" width="9" height="1" fill="#333"/><rect x="774" y="43" width="1" height="9" fill="#333"/><rect x="782" y="43" width="1" height="9" fill="#333"/><rect x="778" y="43" width="1" height="6" fill="#333"/><rect x="774" y="48" width="5" height="1" fill="#333"/><circle cx="792.5" cy="47.5" r="4.5" fill="none" stroke="#333" stroke-width="1" shape-rendering="auto"/><line x1="789" y1="51" x2="796" y2="44" stroke="#333" stroke-width="1" shape-rendering="auto"/>
<path d="M708.5 76.5 L714.5 71.5 L722.5 71.5 L725.5 76.5" fill="#fff" stroke="#000" stroke-width="1" shape-rendering="auto"/><rect x="708" y="76" width="31" height="22" fill="#fff"/><rect x="708" y="76" width="31" height="1" fill="#000"/><rect x="708" y="97" width="31" height="1" fill="#000"/><rect x="708" y="76" width="1" height="22" fill="#000"/><rect x="738" y="76" width="1" height="22" fill="#000"/><path d="M728 66.5 h3 v4.5 h3 l-4.5 4.5 l-4.5 -4.5 h3 z" fill="#000" shape-rendering="auto"/>
<rect x="717" y="78" width="14" height="18" fill="#fff"/><rect x="717" y="78" width="14" height="1" fill="#000"/><rect x="717" y="95" width="14" height="1" fill="#000"/><rect x="717" y="78" width="1" height="18" fill="#000"/><rect x="730" y="78" width="1" height="18" fill="#000"/>
<rect x="719" y="80" width="5" height="1" fill="#0000ff"/><rect x="725" y="80" width="4" height="1" fill="#0000ff"/>
<rect x="719" y="82" width="5" height="1" fill="#0000ff"/><rect x="725" y="82" width="4" height="1" fill="#0000ff"/>
<rect x="719" y="84" width="5" height="1" fill="#0000ff"/><rect x="725" y="84" width="4" height="1" fill="#0000ff"/>
<rect x="719" y="86" width="5" height="1" fill="#0000ff"/><rect x="725" y="86" width="4" height="1" fill="#0000ff"/>
<rect x="719" y="88" width="5" height="1" fill="#0000ff"/><rect x="725" y="88" width="4" height="1" fill="#0000ff"/>
<rect x="719" y="90" width="5" height="1" fill="#0000ff"/><rect x="725" y="90" width="4" height="1" fill="#0000ff"/>
<rect x="719" y="92" width="5" height="1" fill="#0000ff"/><rect x="725" y="92" width="4" height="1" fill="#0000ff"/>
<path d="M758.5 76.5 L764.5 71.5 L772.5 71.5 L775.5 76.5" fill="#fff" stroke="#000" stroke-width="1" shape-rendering="auto"/><rect x="758" y="76" width="31" height="22" fill="#fff"/><rect x="758" y="76" width="31" height="1" fill="#000"/><rect x="758" y="97" width="31" height="1" fill="#000"/><rect x="758" y="76" width="1" height="22" fill="#000"/><rect x="788" y="76" width="1" height="22" fill="#000"/><path d="M778 66.5 h3 v4.5 h3 l-4.5 4.5 l-4.5 -4.5 h3 z" fill="#000" shape-rendering="auto"/>
<path d="M767.5 78.5 h8 l3 3 v14 h-11 z" fill="#fff" stroke="#000" stroke-width="1" shape-rendering="auto"/>
<rect x="770" y="88" width="2" height="6" fill="#e04000"/><rect x="773" y="85" width="2" height="9" fill="#e04000"/><rect x="776" y="88" width="2" height="6" fill="#e04000"/>
<rect x="769" y="86" width="1" height="8" fill="#000"/><rect x="772" y="84" width="1" height="10" fill="#000"/><rect x="775" y="86" width="1" height="8" fill="#000"/><rect x="769" y="93" width="9" height="1" fill="#000"/>
<text x="724.5" y="108.5" font-family="'Liberation Sans', sans-serif" font-size="10" fill="#000" text-anchor="middle" font-weight="normal" textLength="23" lengthAdjust="spacingAndGlyphs">Data</text>
<text x="774.5" y="108.5" font-family="'Liberation Sans', sans-serif" font-size="10" fill="#000" text-anchor="middle" font-weight="normal" textLength="40" lengthAdjust="spacingAndGlyphs">Results</text>
<rect x="712" y="187" width="90" height="172" fill="#fff"/><rect x="712" y="187" width="90" height="1" fill="#000"/><rect x="712" y="358" width="90" height="1" fill="#000"/><rect x="712" y="187" width="1" height="172" fill="#000"/><rect x="801" y="187" width="1" height="172" fill="#000"/>
<rect x="712" y="201" width="90" height="1" fill="#000"/>
<rect x="726" y="187" width="1" height="15" fill="#000"/>
<path d="M717.5 190.5 L721.5 194.5 L717.5 198.5 Z" fill="none" stroke="#333" stroke-width="1" shape-rendering="auto"/>
<text x="735" y="198" font-family="'Liberation Sans', sans-serif" font-size="10" fill="#222" text-anchor="start" font-weight="normal" textLength="18" lengthAdjust="spacingAndGlyphs">Dec</text>
<rect x="770" y="187" width="1" height="15" fill="#000"/><rect x="784" y="187" width="1" height="15" fill="#000"/><rect x="798" y="187" width="1" height="15" fill="#000"/>
<rect x="774" y="190" width="1" height="9" fill="#333"/><rect x="774" y="190" width="5" height="1" fill="#333"/><rect x="774" y="198" width="7" height="1" fill="#333"/><rect x="780" y="192" width="1" height="7" fill="#333"/><rect x="779" y="191" width="1" height="1" fill="#333"/><rect x="778" y="191" width="1" height="2" fill="#333"/><rect x="778" y="192" width="3" height="1" fill="#333"/><rect x="787" y="190" width="9" height="1" fill="#333"/><rect x="787" y="198" width="9" height="1" fill="#333"/><rect x="787" y="190" width="1" height="9" fill="#333"/><rect x="795" y="190" width="1" height="9" fill="#333"/><rect x="791" y="190" width="1" height="6" fill="#333"/><rect x="787" y="195" width="5" height="1" fill="#333"/>
<rect x="798" y="201" width="1" height="158" fill="#000"/>
<rect x="799" y="202" width="1" height="1" fill="#000"/><rect x="800" y="203" width="1" height="1" fill="#000"/><rect x="799" y="204" width="1" height="1" fill="#000"/><rect x="800" y="205" width="1" height="1" fill="#000"/><rect x="799" y="206" width="1" height="1" fill="#000"/><rect x="800" y="207" width="1" height="1" fill="#000"/><rect x="799" y="208" width="1" height="1" fill="#000"/><rect x="800" y="209" width="1" height="1" fill="#000"/><rect x="799" y="210" width="1" height="1" fill="#000"/><rect x="800" y="211" width="1" height="1" fill="#000"/><rect x="799" y="212" width="1" height="1" fill="#000"/><rect x="800" y="213" width="1" height="1" fill="#000"/><rect x="799" y="214" width="1" height="1" fill="#000"/><rect x="800" y="215" width="1" height="1" fill="#000"/>
<text stroke="#000" stroke-width="0.2" x="722.5" y="215" font-family="'Liberation Mono', monospace" font-size="10.5" fill="#000" text-anchor="start" font-weight="normal" textLength="21.4" lengthAdjust="spacingAndGlyphs">1.17</text>
<text stroke="#000" stroke-width="0.2" x="722.5" y="228" font-family="'Liberation Mono', monospace" font-size="10.5" fill="#000" text-anchor="start" font-weight="normal" textLength="21.4" lengthAdjust="spacingAndGlyphs">0.59</text>
<text stroke="#000" stroke-width="0.2" x="722.5" y="241" font-family="'Liberation Mono', monospace" font-size="10.5" fill="#000" text-anchor="start" font-weight="normal" textLength="21.4" lengthAdjust="spacingAndGlyphs">0.72</text>
<text stroke="#000" stroke-width="0.2" x="722.5" y="254" font-family="'Liberation Mono', monospace" font-size="10.5" fill="#000" text-anchor="start" font-weight="normal" textLength="21.4" lengthAdjust="spacingAndGlyphs">0.56</text>
<text stroke="#000" stroke-width="0.2" x="722.5" y="267" font-family="'Liberation Mono', monospace" font-size="10.5" fill="#000" text-anchor="start" font-weight="normal" textLength="21.4" lengthAdjust="spacingAndGlyphs">0.85</text>
<text stroke="#000" stroke-width="0.2" x="722.5" y="280" font-family="'Liberation Mono', monospace" font-size="10.5" fill="#000" text-anchor="start" font-weight="normal" textLength="16.0" lengthAdjust="spacingAndGlyphs">0.5</text>
<text stroke="#000" stroke-width="0.2" x="722.5" y="293" font-family="'Liberation Mono', monospace" font-size="10.5" fill="#000" text-anchor="start" font-weight="normal" textLength="21.4" lengthAdjust="spacingAndGlyphs">0.81</text>
<text stroke="#000" stroke-width="0.2" x="722.5" y="306" font-family="'Liberation Mono', monospace" font-size="10.5" fill="#000" text-anchor="start" font-weight="normal" textLength="21.4" lengthAdjust="spacingAndGlyphs">1.08</text>
<text stroke="#000" stroke-width="0.2" x="722.5" y="319" font-family="'Liberation Mono', monospace" font-size="10.5" fill="#000" text-anchor="start" font-weight="normal" textLength="21.4" lengthAdjust="spacingAndGlyphs">1.42</text>
<text stroke="#000" stroke-width="0.2" x="722.5" y="332" font-family="'Liberation Mono', monospace" font-size="10.5" fill="#000" text-anchor="start" font-weight="normal" textLength="21.4" lengthAdjust="spacingAndGlyphs">1.24</text>
<rect x="713" y="336" width="85" height="12" fill="#000"/>
<rect x="798" y="345" width="4" height="1" fill="#000"/>
<text x="722.5" y="344.8" font-family="'Liberation Mono', monospace" font-size="10.5" fill="#fff" text-anchor="start" font-weight="normal" textLength="5.35" lengthAdjust="spacingAndGlyphs">0</text>
<rect x="435" y="377" width="232" height="177" fill="#fff"/><rect x="435" y="377" width="232" height="1" fill="#000"/><rect x="435" y="553" width="232" height="1" fill="#000"/><rect x="435" y="377" width="1" height="177" fill="#000"/><rect x="666" y="377" width="1" height="177" fill="#000"/>
<rect x="435" y="391" width="232" height="1" fill="#000"/>
<rect x="449" y="377" width="1" height="15" fill="#000"/>
<path d="M440.5 380.5 L444.5 384.5 L440.5 388.5 Z" fill="none" stroke="#333" stroke-width="1" shape-rendering="auto"/>
<text x="458" y="388" font-family="'Liberation Sans', sans-serif" font-size="10" fill="#222" text-anchor="start" font-weight="normal" textLength="66" lengthAdjust="spacingAndGlyphs">Jun/Yr Plot</text>
<rect x="437" y="393" width="228" height="159" fill="#000"/>
<rect x="492" y="403" width="1" height="93" fill="#fff"/>
<rect x="489" y="406" width="8" height="1" fill="#fff"/>
<rect x="489" y="417" width="8" height="1" fill="#fff"/>
<rect x="489" y="428" width="8" height="1" fill="#fff"/>
<rect x="489" y="439" width="8" height="1" fill="#fff"/>
<rect x="489" y="450" width="8" height="1" fill="#fff"/>
<rect x="489" y="461" width="8" height="1" fill="#fff"/>
<rect x="489" y="472" width="8" height="1" fill="#fff"/>
<rect x="489" y="483" width="8" height="1" fill="#fff"/>
<text stroke="#fff" stroke-width="0.2" x="461.4" y="420" font-family="'Liberation Mono', monospace" font-size="10" fill="#fff" text-anchor="start" font-weight="normal" textLength="21.6" lengthAdjust="spacingAndGlyphs">3.00</text>
<text stroke="#fff" stroke-width="0.2" x="461.4" y="442" font-family="'Liberation Mono', monospace" font-size="10" fill="#fff" text-anchor="start" font-weight="normal" textLength="21.6" lengthAdjust="spacingAndGlyphs">1.00</text>
<text stroke="#fff" stroke-width="0.2" x="456.0" y="464" font-family="'Liberation Mono', monospace" font-size="10" fill="#fff" text-anchor="start" font-weight="normal" textLength="27.0" lengthAdjust="spacingAndGlyphs">-1.00</text>
<text stroke="#fff" stroke-width="0.2" x="456.0" y="486" font-family="'Liberation Mono', monospace" font-size="10" fill="#fff" text-anchor="start" font-weight="normal" textLength="27.0" lengthAdjust="spacingAndGlyphs">-3.00</text>
<text x="445" y="465" font-family="'Liberation Sans', sans-serif" font-size="10" fill="#fff" text-anchor="middle" font-weight="normal">J</text>
<text x="445" y="476" font-family="'Liberation Sans', sans-serif" font-size="10" fill="#fff" text-anchor="middle" font-weight="normal">u</text>
<text x="445" y="487" font-family="'Liberation Sans', sans-serif" font-size="10" fill="#fff" text-anchor="middle" font-weight="normal">n</text>
<rect x="502" y="507" width="153" height="1" fill="#fff"/>
<rect x="527" y="503" width="1" height="9" fill="#fff"/>
<text stroke="#fff" stroke-width="0.2" x="515.8" y="523.9" font-family="'Liberation Mono', monospace" font-size="10" fill="#fff" text-anchor="start" font-weight="normal" textLength="22.0" lengthAdjust="spacingAndGlyphs">1900</text>
<rect x="552" y="503" width="1" height="9" fill="#fff"/>
<rect x="577" y="503" width="1" height="9" fill="#fff"/>
<text stroke="#fff" stroke-width="0.2" x="565.8" y="523.9" font-family="'Liberation Mono', monospace" font-size="10" fill="#fff" text-anchor="start" font-weight="normal" textLength="22.0" lengthAdjust="spacingAndGlyphs">1950</text>
<rect x="602" y="503" width="1" height="9" fill="#fff"/>
<rect x="627" y="503" width="1" height="9" fill="#fff"/>
<text stroke="#fff" stroke-width="0.2" x="615.8" y="523.9" font-family="'Liberation Mono', monospace" font-size="10" fill="#fff" text-anchor="start" font-weight="normal" textLength="22.0" lengthAdjust="spacingAndGlyphs">2000</text>
<rect x="653" y="503" width="1" height="9" fill="#fff"/>
<text x="538.9" y="545.4" font-family="'Liberation Sans', sans-serif" font-size="10" fill="#fff" text-anchor="start" font-weight="normal" textLength="23.3" lengthAdjust="spacingAndGlyphs">Year</text>
<rect x="559" y="443" width="3" height="1" fill="#fff"/><rect x="560" y="442" width="1" height="3" fill="#fff"/><rect x="560" y="447" width="3" height="1" fill="#fff"/><rect x="561" y="446" width="1" height="3" fill="#fff"/><rect x="565" y="447" width="3" height="1" fill="#fff"/><rect x="566" y="446" width="1" height="3" fill="#fff"/><rect x="566" y="448" width="3" height="1" fill="#fff"/><rect x="567" y="447" width="1" height="3" fill="#fff"/><rect x="580" y="448" width="3" height="1" fill="#fff"/><rect x="581" y="447" width="1" height="3" fill="#fff"/><rect x="541" y="451" width="3" height="1" fill="#fff"/><rect x="542" y="450" width="1" height="3" fill="#fff"/><rect x="515" y="458" width="3" height="1" fill="#fff"/><rect x="516" y="457" width="1" height="3" fill="#fff"/><rect x="510" y="452" width="3" height="1" fill="#fff"/><rect x="511" y="451" width="1" height="3" fill="#fff"/><rect x="622" y="444" width="3" height="1" fill="#fff"/><rect x="623" y="443" width="1" height="3" fill="#fff"/><rect x="578" y="447" width="3" height="1" fill="#fff"/><rect x="579" y="446" width="1" height="3" fill="#fff"/><rect x="523" y="459" width="3" height="1" fill="#fff"/><rect x="524" y="458" width="1" height="3" fill="#fff"/><rect x="512" y="457" width="3" height="1" fill="#fff"/><rect x="513" y="456" width="1" height="3" fill="#fff"/><rect x="527" y="454" width="3" height="1" fill="#fff"/><rect x="528" y="453" width="1" height="3" fill="#fff"/><rect x="560" y="451" width="3" height="1" fill="#fff"/><rect x="561" y="450" width="1" height="3" fill="#fff"/><rect x="557" y="453" width="3" height="1" fill="#fff"/><rect x="558" y="452" width="1" height="3" fill="#fff"/><rect x="581" y="444" width="3" height="1" fill="#fff"/><rect x="582" y="443" width="1" height="3" fill="#fff"/><rect x="564" y="447" width="3" height="1" fill="#fff"/><rect x="565" y="446" width="1" height="3" fill="#fff"/><rect x="538" y="450" width="3" height="1" fill="#fff"/><rect x="539" y="449" width="1" height="3" fill="#fff"/><rect x="624" y="446" width="3" height="1" fill="#fff"/><rect x="625" y="445" width="1" height="3" fill="#fff"/><rect x="589" y="446" width="3" height="1" fill="#fff"/><rect x="590" y="445" width="1" height="3" fill="#fff"/><rect x="542" y="453" width="3" height="1" fill="#fff"/><rect x="543" y="452" width="1" height="3" fill="#fff"/><rect x="513" y="459" width="3" height="1" fill="#fff"/><rect x="514" y="458" width="1" height="3" fill="#fff"/><rect x="596" y="439" width="3" height="1" fill="#fff"/><rect x="597" y="438" width="1" height="3" fill="#fff"/><rect x="551" y="455" width="3" height="1" fill="#fff"/><rect x="552" y="454" width="1" height="3" fill="#fff"/><rect x="619" y="440" width="3" height="1" fill="#fff"/><rect x="620" y="439" width="1" height="3" fill="#fff"/><rect x="530" y="454" width="3" height="1" fill="#fff"/><rect x="531" y="453" width="1" height="3" fill="#fff"/><rect x="614" y="431" width="3" height="1" fill="#fff"/><rect x="615" y="430" width="1" height="3" fill="#fff"/><rect x="552" y="453" width="3" height="1" fill="#fff"/><rect x="553" y="452" width="1" height="3" fill="#fff"/><rect x="513" y="452" width="3" height="1" fill="#fff"/><rect x="514" y="451" width="1" height="3" fill="#fff"/><rect x="537" y="449" width="3" height="1" fill="#fff"/><rect x="538" y="448" width="1" height="3" fill="#fff"/><rect x="515" y="451" width="3" height="1" fill="#fff"/><rect x="516" y="450" width="1" height="3" fill="#fff"/><rect x="595" y="453" width="3" height="1" fill="#fff"/><rect x="596" y="452" width="1" height="3" fill="#fff"/><rect x="519" y="456" width="3" height="1" fill="#fff"/><rect x="520" y="455" width="1" height="3" fill="#fff"/><rect x="512" y="458" width="3" height="1" fill="#fff"/><rect x="513" y="457" width="1" height="3" fill="#fff"/><rect x="600" y="446" width="3" height="1" fill="#fff"/><rect x="601" y="445" width="1" height="3" fill="#fff"/><rect x="558" y="454" width="3" height="1" fill="#fff"/><rect x="559" y="453" width="1" height="3" fill="#fff"/><rect x="527" y="454" width="3" height="1" fill="#fff"/><rect x="528" y="453" width="1" height="3" fill="#fff"/><rect x="582" y="445" width="3" height="1" fill="#fff"/><rect x="583" y="444" width="1" height="3" fill="#fff"/><rect x="518" y="453" width="3" height="1" fill="#fff"/><rect x="519" y="452" width="1" height="3" fill="#fff"/><rect x="537" y="454" width="3" height="1" fill="#fff"/><rect x="538" y="453" width="1" height="3" fill="#fff"/><rect x="621" y="440" width="3" height="1" fill="#fff"/><rect x="622" y="439" width="1" height="3" fill="#fff"/><rect x="611" y="439" width="3" height="1" fill="#fff"/><rect x="612" y="438" width="1" height="3" fill="#fff"/><rect x="530" y="449" width="3" height="1" fill="#fff"/><rect x="531" y="448" width="1" height="3" fill="#fff"/><rect x="582" y="452" width="3" height="1" fill="#fff"/><rect x="583" y="451" width="1" height="3" fill="#fff"/><rect x="517" y="458" width="3" height="1" fill="#fff"/><rect x="518" y="457" width="1" height="3" fill="#fff"/><rect x="535" y="453" width="3" height="1" fill="#fff"/><rect x="536" y="452" width="1" height="3" fill="#fff"/><rect x="597" y="443" width="3" height="1" fill="#fff"/><rect x="598" y="442" width="1" height="3" fill="#fff"/><rect x="513" y="459" width="3" height="1" fill="#fff"/><rect x="514" y="458" width="1" height="3" fill="#fff"/><rect x="515" y="454" width="3" height="1" fill="#fff"/><rect x="516" y="453" width="1" height="3" fill="#fff"/><rect x="577" y="447" width="3" height="1" fill="#fff"/><rect x="578" y="446" width="1" height="3" fill="#fff"/><rect x="549" y="443" width="3" height="1" fill="#fff"/><rect x="550" y="442" width="1" height="3" fill="#fff"/><rect x="563" y="452" width="3" height="1" fill="#fff"/><rect x="564" y="451" width="1" height="3" fill="#fff"/><rect x="573" y="450" width="3" height="1" fill="#fff"/><rect x="574" y="449" width="1" height="3" fill="#fff"/><rect x="523" y="453" width="3" height="1" fill="#fff"/><rect x="524" y="452" width="1" height="3" fill="#fff"/><rect x="614" y="442" width="3" height="1" fill="#fff"/><rect x="615" y="441" width="1" height="3" fill="#fff"/><rect x="527" y="452" width="3" height="1" fill="#fff"/><rect x="528" y="451" width="1" height="3" fill="#fff"/><rect x="593" y="448" width="3" height="1" fill="#fff"/><rect x="594" y="447" width="1" height="3" fill="#fff"/><rect x="619" y="439" width="3" height="1" fill="#fff"/><rect x="620" y="438" width="1" height="3" fill="#fff"/><rect x="610" y="439" width="3" height="1" fill="#fff"/><rect x="611" y="438" width="1" height="3" fill="#fff"/><rect x="517" y="454" width="3" height="1" fill="#fff"/><rect x="518" y="453" width="1" height="3" fill="#fff"/><rect x="509" y="459" width="3" height="1" fill="#fff"/><rect x="510" y="458" width="1" height="3" fill="#fff"/><rect x="589" y="446" width="3" height="1" fill="#fff"/><rect x="590" y="445" width="1" height="3" fill="#fff"/><rect x="535" y="456" width="3" height="1" fill="#fff"/><rect x="536" y="455" width="1" height="3" fill="#fff"/><rect x="540" y="448" width="3" height="1" fill="#fff"/><rect x="541" y="447" width="1" height="3" fill="#fff"/><rect x="526" y="454" width="3" height="1" fill="#fff"/><rect x="527" y="453" width="1" height="3" fill="#fff"/><rect x="532" y="452" width="3" height="1" fill="#fff"/><rect x="533" y="451" width="1" height="3" fill="#fff"/><rect x="572" y="452" width="3" height="1" fill="#fff"/><rect x="573" y="451" width="1" height="3" fill="#fff"/><rect x="538" y="449" width="3" height="1" fill="#fff"/><rect x="539" y="448" width="1" height="3" fill="#fff"/><rect x="615" y="441" width="3" height="1" fill="#fff"/><rect x="616" y="440" width="1" height="3" fill="#fff"/><rect x="537" y="454" width="3" height="1" fill="#fff"/><rect x="538" y="453" width="1" height="3" fill="#fff"/><rect x="558" y="452" width="3" height="1" fill="#fff"/><rect x="559" y="451" width="1" height="3" fill="#fff"/><rect x="549" y="452" width="3" height="1" fill="#fff"/><rect x="550" y="451" width="1" height="3" fill="#fff"/><rect x="573" y="451" width="3" height="1" fill="#fff"/><rect x="574" y="450" width="1" height="3" fill="#fff"/><rect x="611" y="444" width="3" height="1" fill="#fff"/><rect x="612" y="443" width="1" height="3" fill="#fff"/><rect x="622" y="436" width="3" height="1" fill="#fff"/><rect x="623" y="435" width="1" height="3" fill="#fff"/><rect x="575" y="444" width="3" height="1" fill="#fff"/><rect x="576" y="443" width="1" height="3" fill="#fff"/><rect x="521" y="456" width="3" height="1" fill="#fff"/><rect x="522" y="455" width="1" height="3" fill="#fff"/><rect x="614" y="441" width="3" height="1" fill="#fff"/><rect x="615" y="440" width="1" height="3" fill="#fff"/><rect x="589" y="447" width="3" height="1" fill="#fff"/><rect x="590" y="446" width="1" height="3" fill="#fff"/><rect x="581" y="447" width="3" height="1" fill="#fff"/><rect x="582" y="446" width="1" height="3" fill="#fff"/><rect x="562" y="449" width="3" height="1" fill="#fff"/><rect x="563" y="448" width="1" height="3" fill="#fff"/><rect x="624" y="435" width="3" height="1" fill="#fff"/><rect x="625" y="434" width="1" height="3" fill="#fff"/><rect x="514" y="451" width="3" height="1" fill="#fff"/><rect x="515" y="450" width="1" height="3" fill="#fff"/><rect x="613" y="440" width="3" height="1" fill="#fff"/><rect x="614" y="439" width="1" height="3" fill="#fff"/><rect x="593" y="444" width="3" height="1" fill="#fff"/><rect x="594" y="443" width="1" height="3" fill="#fff"/><rect x="614" y="435" width="3" height="1" fill="#fff"/><rect x="615" y="434" width="1" height="3" fill="#fff"/><rect x="547" y="449" width="3" height="1" fill="#fff"/><rect x="548" y="448" width="1" height="3" fill="#fff"/><rect x="609" y="435" width="3" height="1" fill="#fff"/><rect x="610" y="434" width="1" height="3" fill="#fff"/><rect x="555" y="453" width="3" height="1" fill="#fff"/><rect x="556" y="452" width="1" height="3" fill="#fff"/><rect x="573" y="441" width="3" height="1" fill="#fff"/><rect x="574" y="440" width="1" height="3" fill="#fff"/><rect x="579" y="444" width="3" height="1" fill="#fff"/><rect x="580" y="443" width="1" height="3" fill="#fff"/><rect x="578" y="451" width="3" height="1" fill="#fff"/><rect x="579" y="450" width="1" height="3" fill="#fff"/><rect x="514" y="449" width="3" height="1" fill="#fff"/><rect x="515" y="448" width="1" height="3" fill="#fff"/><rect x="610" y="433" width="3" height="1" fill="#fff"/><rect x="611" y="432" width="1" height="3" fill="#fff"/><rect x="592" y="441" width="3" height="1" fill="#fff"/><rect x="593" y="440" width="1" height="3" fill="#fff"/><rect x="574" y="452" width="3" height="1" fill="#fff"/><rect x="575" y="451" width="1" height="3" fill="#fff"/><rect x="557" y="451" width="3" height="1" fill="#fff"/><rect x="558" y="450" width="1" height="3" fill="#fff"/><rect x="595" y="444" width="3" height="1" fill="#fff"/><rect x="596" y="443" width="1" height="3" fill="#fff"/><rect x="508" y="454" width="3" height="1" fill="#fff"/><rect x="509" y="453" width="1" height="3" fill="#fff"/><rect x="532" y="451" width="3" height="1" fill="#fff"/><rect x="533" y="450" width="1" height="3" fill="#fff"/><rect x="588" y="441" width="3" height="1" fill="#fff"/><rect x="589" y="440" width="1" height="3" fill="#fff"/><rect x="615" y="441" width="3" height="1" fill="#fff"/><rect x="616" y="440" width="1" height="3" fill="#fff"/><rect x="535" y="456" width="3" height="1" fill="#fff"/><rect x="536" y="455" width="1" height="3" fill="#fff"/><rect x="586" y="447" width="3" height="1" fill="#fff"/><rect x="587" y="446" width="1" height="3" fill="#fff"/><rect x="529" y="458" width="3" height="1" fill="#fff"/><rect x="530" y="457" width="1" height="3" fill="#fff"/><rect x="584" y="454" width="3" height="1" fill="#fff"/><rect x="585" y="453" width="1" height="3" fill="#fff"/><rect x="558" y="453" width="3" height="1" fill="#fff"/><rect x="559" y="452" width="1" height="3" fill="#fff"/><rect x="584" y="445" width="3" height="1" fill="#fff"/><rect x="585" y="444" width="1" height="3" fill="#fff"/><rect x="528" y="448" width="3" height="1" fill="#fff"/><rect x="529" y="447" width="1" height="3" fill="#fff"/><rect x="614" y="444" width="3" height="1" fill="#fff"/><rect x="615" y="443" width="1" height="3" fill="#fff"/><rect x="610" y="438" width="3" height="1" fill="#fff"/><rect x="611" y="437" width="1" height="3" fill="#fff"/><rect x="542" y="456" width="3" height="1" fill="#fff"/><rect x="543" y="455" width="1" height="3" fill="#fff"/><rect x="521" y="448" width="3" height="1" fill="#fff"/><rect x="522" y="447" width="1" height="3" fill="#fff"/><rect x="606" y="443" width="3" height="1" fill="#fff"/><rect x="607" y="442" width="1" height="3" fill="#fff"/><rect x="590" y="449" width="3" height="1" fill="#fff"/><rect x="591" y="448" width="1" height="3" fill="#fff"/><rect x="525" y="454" width="3" height="1" fill="#fff"/><rect x="526" y="453" width="1" height="3" fill="#fff"/><rect x="559" y="450" width="3" height="1" fill="#fff"/><rect x="560" y="449" width="1" height="3" fill="#fff"/><rect x="554" y="453" width="3" height="1" fill="#fff"/><rect x="555" y="452" width="1" height="3" fill="#fff"/><rect x="580" y="444" width="3" height="1" fill="#fff"/><rect x="581" y="443" width="1" height="3" fill="#fff"/><rect x="605" y="443" width="3" height="1" fill="#fff"/><rect x="606" y="442" width="1" height="3" fill="#fff"/><rect x="622" y="438" width="3" height="1" fill="#fff"/><rect x="623" y="437" width="1" height="3" fill="#fff"/><rect x="508" y="457" width="3" height="1" fill="#fff"/><rect x="509" y="456" width="1" height="3" fill="#fff"/><rect x="609" y="447" width="3" height="1" fill="#fff"/><rect x="610" y="446" width="1" height="3" fill="#fff"/><rect x="573" y="450" width="3" height="1" fill="#fff"/><rect x="574" y="449" width="1" height="3" fill="#fff"/><rect x="542" y="453" width="3" height="1" fill="#fff"/><rect x="543" y="452" width="1" height="3" fill="#fff"/><rect x="521" y="455" width="3" height="1" fill="#fff"/><rect x="522" y="454" width="1" height="3" fill="#fff"/><rect x="559" y="457" width="3" height="1" fill="#fff"/><rect x="560" y="456" width="1" height="3" fill="#fff"/><rect x="533" y="455" width="3" height="1" fill="#fff"/><rect x="534" y="454" width="1" height="3" fill="#fff"/><rect x="521" y="460" width="3" height="1" fill="#fff"/><rect x="522" y="459" width="1" height="3" fill="#fff"/><rect x="558" y="452" width="3" height="1" fill="#fff"/><rect x="559" y="451" width="1" height="3" fill="#fff"/><rect x="580" y="444" width="3" height="1" fill="#fff"/><rect x="581" y="443" width="1" height="3" fill="#fff"/><rect x="620" y="434" width="3" height="1" fill="#fff"/><rect x="621" y="433" width="1" height="3" fill="#fff"/><rect x="587" y="448" width="3" height="1" fill="#fff"/><rect x="588" y="447" width="1" height="3" fill="#fff"/><rect x="526" y="458" width="3" height="1" fill="#fff"/><rect x="527" y="457" width="1" height="3" fill="#fff"/><rect x="506" y="452" width="3" height="1" fill="#fff"/><rect x="507" y="451" width="1" height="3" fill="#fff"/><rect x="526" y="456" width="3" height="1" fill="#fff"/><rect x="527" y="455" width="1" height="3" fill="#fff"/><rect x="537" y="450" width="3" height="1" fill="#fff"/><rect x="538" y="449" width="1" height="3" fill="#fff"/><rect x="567" y="454" width="3" height="1" fill="#fff"/><rect x="568" y="453" width="1" height="3" fill="#fff"/><rect x="578" y="448" width="3" height="1" fill="#fff"/><rect x="579" y="447" width="1" height="3" fill="#fff"/><rect x="600" y="441" width="3" height="1" fill="#fff"/><rect x="601" y="440" width="1" height="3" fill="#fff"/><rect x="613" y="448" width="3" height="1" fill="#fff"/><rect x="614" y="447" width="1" height="3" fill="#fff"/><rect x="591" y="450" width="3" height="1" fill="#fff"/><rect x="592" y="449" width="1" height="3" fill="#fff"/><rect x="520" y="451" width="3" height="1" fill="#fff"/><rect x="521" y="450" width="1" height="3" fill="#fff"/><rect x="614" y="442" width="3" height="1" fill="#fff"/><rect x="615" y="441" width="1" height="3" fill="#fff"/><rect x="550" y="445" width="3" height="1" fill="#fff"/><rect x="551" y="444" width="1" height="3" fill="#fff"/><rect x="600" y="441" width="3" height="1" fill="#fff"/><rect x="601" y="440" width="1" height="3" fill="#fff"/><rect x="618" y="435" width="3" height="1" fill="#fff"/><rect x="619" y="434" width="1" height="3" fill="#fff"/><rect x="529" y="455" width="3" height="1" fill="#fff"/><rect x="530" y="454" width="1" height="3" fill="#fff"/><rect x="591" y="448" width="3" height="1" fill="#fff"/><rect x="592" y="447" width="1" height="3" fill="#fff"/><rect x="591" y="441" width="3" height="1" fill="#fff"/><rect x="592" y="440" width="1" height="3" fill="#fff"/><rect x="530" y="462" width="3" height="1" fill="#fff"/><rect x="531" y="461" width="1" height="3" fill="#fff"/><rect x="622" y="433" width="3" height="1" fill="#fff"/><rect x="623" y="432" width="1" height="3" fill="#fff"/><rect x="569" y="450" width="3" height="1" fill="#fff"/><rect x="570" y="449" width="1" height="3" fill="#fff"/><rect x="614" y="438" width="3" height="1" fill="#fff"/><rect x="615" y="437" width="1" height="3" fill="#fff"/><rect x="607" y="442" width="3" height="1" fill="#fff"/><rect x="608" y="441" width="1" height="3" fill="#fff"/><rect x="557" y="452" width="3" height="1" fill="#fff"/><rect x="558" y="451" width="1" height="3" fill="#fff"/><rect x="571" y="449" width="3" height="1" fill="#fff"/><rect x="572" y="448" width="1" height="3" fill="#fff"/><rect x="508" y="453" width="3" height="1" fill="#fff"/><rect x="509" y="452" width="1" height="3" fill="#fff"/><rect x="602" y="450" width="3" height="1" fill="#fff"/><rect x="603" y="449" width="1" height="3" fill="#fff"/><rect x="525" y="457" width="3" height="1" fill="#fff"/><rect x="526" y="456" width="1" height="3" fill="#fff"/><rect x="545" y="453" width="3" height="1" fill="#fff"/><rect x="546" y="452" width="1" height="3" fill="#fff"/><rect x="522" y="453" width="3" height="1" fill="#fff"/><rect x="523" y="452" width="1" height="3" fill="#fff"/><rect x="566" y="448" width="3" height="1" fill="#fff"/><rect x="567" y="447" width="1" height="3" fill="#fff"/><rect x="587" y="440" width="3" height="1" fill="#fff"/><rect x="588" y="439" width="1" height="3" fill="#fff"/><rect x="618" y="431" width="3" height="1" fill="#fff"/><rect x="619" y="430" width="1" height="3" fill="#fff"/><rect x="515" y="456" width="3" height="1" fill="#fff"/><rect x="516" y="455" width="1" height="3" fill="#fff"/><rect x="531" y="451" width="3" height="1" fill="#fff"/><rect x="532" y="450" width="1" height="3" fill="#fff"/><rect x="592" y="445" width="3" height="1" fill="#fff"/><rect x="593" y="444" width="1" height="3" fill="#fff"/><rect x="581" y="440" width="3" height="1" fill="#fff"/><rect x="582" y="439" width="1" height="3" fill="#fff"/><rect x="572" y="448" width="3" height="1" fill="#fff"/><rect x="573" y="447" width="1" height="3" fill="#fff"/>
<line x1="494" y1="460.5" x2="665" y2="437.8" stroke="#fff" stroke-width="1.2" shape-rendering="auto"/>
<rect x="623" y="437" width="6" height="6" fill="#fff"/>
<path d="M651.5 545.5 l5 -5 l3 3 l-5 5 z M653 542 l3 3" fill="none" stroke="#fff" stroke-width="1" shape-rendering="auto"/>
<rect x="556" y="295" width="155" height="96" fill="#fff"/><rect x="556" y="295" width="155" height="1" fill="#000"/><rect x="556" y="390" width="155" height="1" fill="#000"/><rect x="556" y="295" width="1" height="96" fill="#000"/><rect x="710" y="295" width="1" height="96" fill="#000"/>
<rect x="556" y="309" width="155" height="1" fill="#000"/>
<rect x="556" y="376" width="155" height="1" fill="#000"/>
<rect x="696" y="376" width="1" height="15" fill="#000"/>
<text x="565" y="306" font-family="'Liberation Sans', sans-serif" font-size="10" fill="#222" text-anchor="start" font-weight="normal" textLength="86" lengthAdjust="spacingAndGlyphs">C:\My Docume...</text>
<rect x="668" y="295" width="1" height="15" fill="#000"/><rect x="682" y="295" width="1" height="15" fill="#000"/><rect x="696" y="295" width="1" height="15" fill="#000"/>
<rect x="672" y="298" width="1" height="9" fill="#333"/><rect x="672" y="298" width="5" height="1" fill="#333"/><rect x="672" y="306" width="7" height="1" fill="#333"/><rect x="678" y="300" width="1" height="7" fill="#333"/><rect x="677" y="299" width="1" height="1" fill="#333"/><rect x="676" y="299" width="1" height="2" fill="#333"/><rect x="676" y="300" width="3" height="1" fill="#333"/><rect x="685" y="298" width="9" height="1" fill="#333"/><rect x="685" y="306" width="9" height="1" fill="#333"/><rect x="685" y="298" width="1" height="9" fill="#333"/><rect x="693" y="298" width="1" height="9" fill="#333"/><rect x="689" y="298" width="1" height="6" fill="#333"/><rect x="685" y="303" width="5" height="1" fill="#333"/><circle cx="703.5" cy="302.5" r="4.5" fill="none" stroke="#333" stroke-width="1" shape-rendering="auto"/><line x1="700" y1="306" x2="707" y2="299" stroke="#333" stroke-width="1" shape-rendering="auto"/>
<rect x="586" y="321" width="13" height="31" fill="#555"/><rect x="585" y="320" width="13" height="31" fill="#808080"/><rect x="585" y="320" width="13" height="1" fill="#000"/><rect x="585" y="350" width="13" height="1" fill="#000"/><rect x="585" y="320" width="1" height="31" fill="#000"/><rect x="597" y="320" width="1" height="31" fill="#000"/><rect x="591" y="323" width="4" height="1" fill="#0000ff"/><rect x="591" y="326" width="4" height="1" fill="#0000ff"/><rect x="591" y="329" width="4" height="1" fill="#0000ff"/><rect x="592" y="332" width="3" height="1" fill="#0000ff"/><rect x="591" y="335" width="4" height="1" fill="#0000ff"/><rect x="590" y="338" width="5" height="1" fill="#0000ff"/><rect x="592" y="341" width="3" height="1" fill="#0000ff"/><rect x="590" y="344" width="5" height="1" fill="#0000ff"/><rect x="591" y="347" width="4" height="1" fill="#0000ff"/>
<text x="583.9" y="362.6" font-family="'Liberation Sans', sans-serif" font-size="10" fill="#000" text-anchor="start" font-weight="normal" textLength="17.3" lengthAdjust="spacingAndGlyphs">Jun</text>
<rect x="636" y="321" width="13" height="31" fill="#555"/><rect x="635" y="320" width="13" height="31" fill="#fff"/><rect x="635" y="320" width="13" height="1" fill="#000"/><rect x="635" y="350" width="13" height="1" fill="#000"/><rect x="635" y="320" width="1" height="31" fill="#000"/><rect x="647" y="320" width="1" height="31" fill="#000"/><rect x="641" y="323" width="4" height="1" fill="#0000ff"/><rect x="641" y="326" width="4" height="1" fill="#0000ff"/><rect x="641" y="329" width="4" height="1" fill="#0000ff"/><rect x="642" y="332" width="3" height="1" fill="#0000ff"/><rect x="641" y="335" width="4" height="1" fill="#0000ff"/><rect x="640" y="338" width="5" height="1" fill="#0000ff"/><rect x="642" y="341" width="3" height="1" fill="#0000ff"/><rect x="640" y="344" width="5" height="1" fill="#0000ff"/><rect x="641" y="347" width="4" height="1" fill="#0000ff"/>
<text x="634.7" y="362.6" font-family="'Liberation Sans', sans-serif" font-size="10" fill="#000" text-anchor="start" font-weight="normal" textLength="14.8" lengthAdjust="spacingAndGlyphs">Jul</text>
<rect x="686" y="321" width="13" height="31" fill="#555"/><rect x="685" y="320" width="13" height="31" fill="#fff"/><rect x="685" y="320" width="13" height="1" fill="#000"/><rect x="685" y="350" width="13" height="1" fill="#000"/><rect x="685" y="320" width="1" height="31" fill="#000"/><rect x="697" y="320" width="1" height="31" fill="#000"/><rect x="691" y="323" width="4" height="1" fill="#0000ff"/><rect x="691" y="326" width="4" height="1" fill="#0000ff"/><rect x="691" y="329" width="4" height="1" fill="#0000ff"/><rect x="692" y="332" width="3" height="1" fill="#0000ff"/><rect x="691" y="335" width="4" height="1" fill="#0000ff"/><rect x="690" y="338" width="5" height="1" fill="#0000ff"/><rect x="692" y="341" width="3" height="1" fill="#0000ff"/><rect x="690" y="344" width="5" height="1" fill="#0000ff"/><rect x="691" y="347" width="4" height="1" fill="#0000ff"/>
<text x="682.9" y="362.6" font-family="'Liberation Sans', sans-serif" font-size="10" fill="#000" text-anchor="start" font-weight="normal" textLength="18.5" lengthAdjust="spacingAndGlyphs">Aug</text>
<path d="M585.5 330 L591 334.5 L596.5 330 M591 334.5 V340.5" fill="none" stroke="#000" stroke-width="4.6" stroke-linecap="square" shape-rendering="auto"/>
<path d="M585.5 330 L591 334.5 L596.5 330 M591 334.5 V340.5" fill="none" stroke="#ffe000" stroke-width="2.6" shape-rendering="auto"/>
<rect x="672" y="419" width="130" height="79" fill="#fff"/><rect x="672" y="419" width="130" height="1" fill="#000"/><rect x="672" y="497" width="130" height="1" fill="#000"/><rect x="672" y="419" width="1" height="79" fill="#000"/><rect x="801" y="419" width="1" height="79" fill="#000"/>
<rect x="672" y="433" width="130" height="1" fill="#000"/>
<rect x="686" y="419" width="1" height="15" fill="#000"/>
<rect x="687" y="420" width="114" height="13" fill="#9999cc"/><rect x="687" y="420" width="114" height="1" fill="#ccccff"/><rect x="687" y="432" width="114" height="1" fill="#669999"/>
<rect x="673" y="420" width="13" height="13" fill="#fff"/><rect x="673" y="420" width="13" height="1" fill="#ccccff"/><rect x="673" y="432" width="13" height="1" fill="#ccccff"/><rect x="673" y="420" width="1" height="13" fill="#ccccff"/><rect x="685" y="420" width="1" height="13" fill="#ccccff"/><rect x="673" y="432" width="13" height="1" fill="#9999cc"/><rect x="685" y="420" width="1" height="13" fill="#9999cc"/>
<path d="M677.5 422.5 L681.5 426.5 L677.5 430.5 Z" fill="none" stroke="#333" stroke-width="1" shape-rendering="auto"/>
<text x="694.5" y="430" font-family="'Liberation Sans', sans-serif" font-size="10" fill="#000" text-anchor="start" font-weight="normal" textLength="46" lengthAdjust="spacingAndGlyphs">Scratch 1</text>
<text x="678.9" y="447.8" font-family="'Liberation Sans', sans-serif" font-size="10" fill="#000" text-anchor="start" font-weight="normal" textLength="92" lengthAdjust="spacingAndGlyphs" word-spacing="2">Global Warming?</text>
<rect x="771" y="442" width="1" height="11" fill="#000"/>
<g shape-rendering="auto" fill="none"><path d="M745 529.5 L747 527.5 H767 L769 529.5 Z" fill="#fff" stroke="#000" stroke-width="1.2"/><path d="M753.5 527 L754.5 525.5 H759 L760 527" fill="#fff" stroke="#000" stroke-width="1.2"/></g>
<rect x="747" y="530" width="20" height="23" fill="#fff"/><rect x="747" y="530" width="20" height="1" fill="#000"/><rect x="747" y="552" width="20" height="1" fill="#000"/><rect x="747" y="530" width="1" height="23" fill="#000"/><rect x="766" y="530" width="1" height="23" fill="#000"/>
<path d="M750.5 534.0 H755.725 Q760.0 534.0 760.0 539.5 Q760.0 545.0 755.725 545.0 H750.5 M753.0 534.0 V545.0" fill="none" stroke="#0000ff" stroke-width="1.1" shape-rendering="auto"/>
<path d="M754.5 537.5 H759.725 Q764.0 537.5 764.0 543.0 Q764.0 548.5 759.725 548.5 H754.5 M757.0 537.5 V548.5" fill="none" stroke="#800080" stroke-width="1.1" shape-rendering="auto"/>
<rect x="736" y="554" width="37" height="14" fill="#fff"/>
<text x="739" y="563.8" font-family="'Liberation Sans', sans-serif" font-size="10" fill="#000" text-anchor="start" font-weight="normal" textLength="30.3" lengthAdjust="spacingAndGlyphs">Trash</text>
<rect x="793" y="565" width="8" height="8" fill="#fff"/><rect x="793" y="565" width="1" height="8" fill="#000"/><rect x="793" y="565" width="8" height="1" fill="#000"/>
<rect x="794" y="567" width="2" height="1" fill="#444"/><rect x="794" y="569" width="2" height="1" fill="#444"/><rect x="794" y="571" width="2" height="1" fill="#444"/><rect x="797" y="567" width="2" height="1" fill="#444"/><rect x="797" y="569" width="2" height="1" fill="#444"/><rect x="797" y="571" width="2" height="1" fill="#444"/>
<rect x="1" y="573" width="800" height="28" fill="#cccccc"/>
<rect x="1" y="573" width="800" height="1" fill="#dfdfdf"/>
<rect x="1" y="574" width="800" height="1" fill="#ffffff"/>
<rect x="3" y="577" width="54" height="22" fill="#cccccc"/><rect x="3" y="577" width="54" height="1" fill="#fff"/><rect x="3" y="577" width="1" height="22" fill="#fff"/><rect x="3" y="598" width="54" height="1" fill="#000"/><rect x="56" y="577" width="1" height="22" fill="#000"/><rect x="4" y="597" width="52" height="1" fill="#808080"/><rect x="55" y="578" width="1" height="20" fill="#808080"/>
<text x="25.7" y="592" font-family="'Liberation Sans', sans-serif" font-size="12.5" fill="#000" text-anchor="start" font-weight="bold" textLength="26.3" lengthAdjust="spacingAndGlyphs">Start</text>
<g shape-rendering="auto"><path d="M13.5 583 L17 581 H21 L23 582.5 V595 L20.5 593.5 H17 L14 595 Z" fill="#000"/><path d="M15.5 583.5 L17.5 582.5 V586.5 L15.5 587.5 Z" fill="#f00"/><path d="M19 582.5 L21 583.5 V587.5 L19 586.5 Z" fill="#0f0"/><path d="M15.5 589 L17.5 588 V592 L15.5 593 Z" fill="#00f"/><path d="M19 588 L21 589 V593 L19 592 Z" fill="#ff0"/><rect x="9" y="584" width="5" height="9" fill="#000"/><rect x="9.5" y="587" width="4" height="2" fill="#f00"/><rect x="9.5" y="590" width="4" height="2" fill="#00f"/><rect x="7" y="583" width="1.3" height="2" fill="#000"/><rect x="7" y="586.5" width="1.3" height="2" fill="#f00"/><rect x="7" y="589.5" width="1.3" height="2" fill="#00f"/><rect x="7" y="592.5" width="1.3" height="2" fill="#000"/></g>
<rect x="60" y="577" width="104" height="22" fill="#cccccc"/><rect x="60" y="577" width="104" height="1" fill="#fff"/><rect x="60" y="577" width="1" height="22" fill="#fff"/><rect x="60" y="598" width="104" height="1" fill="#000"/><rect x="163" y="577" width="1" height="22" fill="#000"/><rect x="61" y="597" width="102" height="1" fill="#808080"/><rect x="162" y="578" width="1" height="20" fill="#808080"/>
<text x="83.6" y="591.8" font-family="'Liberation Sans', sans-serif" font-size="12" fill="#000" text-anchor="start" font-weight="normal" textLength="53.8" lengthAdjust="spacingAndGlyphs">Pc disk (C:)</text>
<rect x="166" y="577" width="104" height="22" fill="#cccccc"/><rect x="166" y="577" width="104" height="1" fill="#000"/><rect x="166" y="577" width="1" height="22" fill="#000"/><rect x="166" y="598" width="104" height="1" fill="#fff"/><rect x="269" y="577" width="1" height="22" fill="#fff"/><rect x="167" y="578" width="102" height="1" fill="#808080"/><rect x="167" y="578" width="1" height="20" fill="#808080"/>
<rect x="168" y="579" width="101" height="19" fill="url(#chkw)"/>
<text x="189.7" y="591.8" font-family="'Liberation Sans', sans-serif" font-size="12" fill="#000" text-anchor="start" font-weight="bold" textLength="70.5" lengthAdjust="spacingAndGlyphs">Data Desk...</text>
<rect x="272" y="577" width="104" height="22" fill="#cccccc"/><rect x="272" y="577" width="104" height="1" fill="#fff"/><rect x="272" y="577" width="1" height="22" fill="#fff"/><rect x="272" y="598" width="104" height="1" fill="#000"/><rect x="375" y="577" width="1" height="22" fill="#000"/><rect x="273" y="597" width="102" height="1" fill="#808080"/><rect x="374" y="578" width="1" height="20" fill="#808080"/>
<text x="295.4" y="591.8" font-family="'Liberation Sans', sans-serif" font-size="12" fill="#000" text-anchor="start" font-weight="normal" textLength="61.9" lengthAdjust="spacingAndGlyphs">My Computer</text>
<rect x="378" y="577" width="104" height="22" fill="#cccccc"/><rect x="378" y="577" width="104" height="1" fill="#fff"/><rect x="378" y="577" width="1" height="22" fill="#fff"/><rect x="378" y="598" width="104" height="1" fill="#000"/><rect x="481" y="577" width="1" height="22" fill="#000"/><rect x="379" y="597" width="102" height="1" fill="#808080"/><rect x="480" y="578" width="1" height="20" fill="#808080"/>
<text x="401.8" y="591.8" font-family="'Liberation Sans', sans-serif" font-size="12" fill="#000" text-anchor="start" font-weight="normal" textLength="77.3" lengthAdjust="spacingAndGlyphs">Microsoft Exce...</text>
<rect x="484" y="577" width="104" height="22" fill="#cccccc"/><rect x="484" y="577" width="104" height="1" fill="#fff"/><rect x="484" y="577" width="1" height="22" fill="#fff"/><rect x="484" y="598" width="104" height="1" fill="#000"/><rect x="587" y="577" width="1" height="22" fill="#000"/><rect x="485" y="597" width="102" height="1" fill="#808080"/><rect x="586" y="578" width="1" height="20" fill="#808080"/>
<text x="507.5" y="591.8" font-family="'Liberation Sans', sans-serif" font-size="12" fill="#000" text-anchor="start" font-weight="normal" textLength="71.0" lengthAdjust="spacingAndGlyphs">My Documents</text>
<g shape-rendering="auto"><rect x="65.5" y="585.5" width="15" height="7" rx="1.5" fill="#e8e8e8" stroke="#808080"/><rect x="67" y="587" width="12" height="2" fill="#fff"/><rect x="67" y="590" width="10" height="1" fill="#999"/><rect x="76" y="588" width="1.5" height="1.5" fill="#0a0"/><path d="M81 586 v6.5 l-1.5 1.5 h-13" fill="none" stroke="#000" stroke-width="1.2"/><rect x="281.5" y="581.5" width="10" height="8" rx="1" fill="#e0e0e0" stroke="#555"/><rect x="283" y="583" width="6" height="4" fill="#008080" stroke="#000" stroke-width="0.8"/><path d="M292 582 v8" stroke="#000"/><path d="M280.5 590.5 h12 l-2 3.5 h-12 z" fill="#fff" stroke="#000"/><path d="M281 592 h9" stroke="#555" stroke-dasharray="1 1"/><path d="M383.5 582.5 h5 l9.5 11 h-5 z" fill="#00e0e0" stroke="#000" stroke-width="1"/><path d="M392 582.5 h5.5 l-3.5 4 h-3 z M384 593.5 l4 -5 h2.5 l-1.5 5 z" fill="#00a0a0" stroke="#000" stroke-width="1"/><path d="M491.5 582.5 l1 -1 h4 l1 1 h6 v10 h-12 z" fill="#ffff90" stroke="#555" stroke-width="1"/><path d="M489.5 587.5 h11 l3 5.5 h-12 z" fill="#ffff60" stroke="#444" stroke-width="1"/><path d="M504 583 v10.5 h-12" fill="none" stroke="#000" stroke-width="1.3"/></g>
<g transform="translate(168 579)" shape-rendering="auto"><path d="M3 11.5 L9 6.5 L12.5 8 L7.5 14.5 Z" fill="#e8f0e8" stroke="#000" stroke-width="1.2"/><path d="M5 11.5 L6 11 M7 10 L8 9.5 M6 13 L7 12.5" stroke="#000" stroke-width="0.9"/><path d="M4 12 V15 M7.5 14.5 V17 M10 11.5 V13.5 M13 9 V12 M15 8 V11" stroke="#000" stroke-width="1.1"/><line x1="4.6" y1="5" x2="4.6" y2="8.7" stroke="#00f" stroke-width="1.3"/><line x1="6.4" y1="2" x2="6.4" y2="9" stroke="#f00" stroke-width="1.3"/><line x1="8.5" y1="3" x2="8.5" y2="7" stroke="#909" stroke-width="1.3"/><line x1="10.4" y1="2" x2="10.4" y2="5" stroke="#0f0" stroke-width="1.3"/><path d="M11.5 5.5 L15.5 7 L13 9" fill="none" stroke="#000" stroke-width="2.2"/><path d="M11.5 5.5 L15.5 7 L13 9" fill="none" stroke="#ff0" stroke-width="1.1"/></g>
<rect x="701" y="577" width="98" height="22" fill="#cccccc"/>
<rect x="701" y="577" width="98" height="1" fill="#808080"/><rect x="701" y="577" width="1" height="22" fill="#808080"/><rect x="701" y="598" width="98" height="1" fill="#fff"/><rect x="798" y="577" width="1" height="22" fill="#fff"/>
<text x="748.8" y="592.6" font-family="'Liberation Sans', sans-serif" font-size="12" fill="#000" text-anchor="start" font-weight="normal" textLength="38.4" lengthAdjust="spacingAndGlyphs">9:20 PM</text>
<g shape-rendering="auto"><rect x="704.5" y="580.5" width="14" height="11" rx="1" fill="#e0e0e0" stroke="#000"/><rect x="706" y="583" width="8" height="7" fill="#00f"/><rect x="706" y="592.5" width="10" height="2.5" fill="#fff" stroke="#000" stroke-width="0.8"/><path d="M713.5 585 q2.5 0 2.5 4 v4 q-2 1 -2.5 -1 z" fill="#f00"/><path d="M709 593.5 l8.5 -8" stroke="#ff0" stroke-width="1.5"/><circle cx="714.5" cy="582" r="1" fill="#0c0"/><path d="M721.5 587 h2 l5 -6 v13 l-5 -5 h-2 z" fill="#ff0" stroke="#000"/><path d="M729 581.5 q2 6 0 12" fill="#fff" stroke="#000"/><path d="M733 584 l3 -2 M733 588.5 h4 M733 592 l3 2" stroke="#808080"/></g></svg></body></html>
